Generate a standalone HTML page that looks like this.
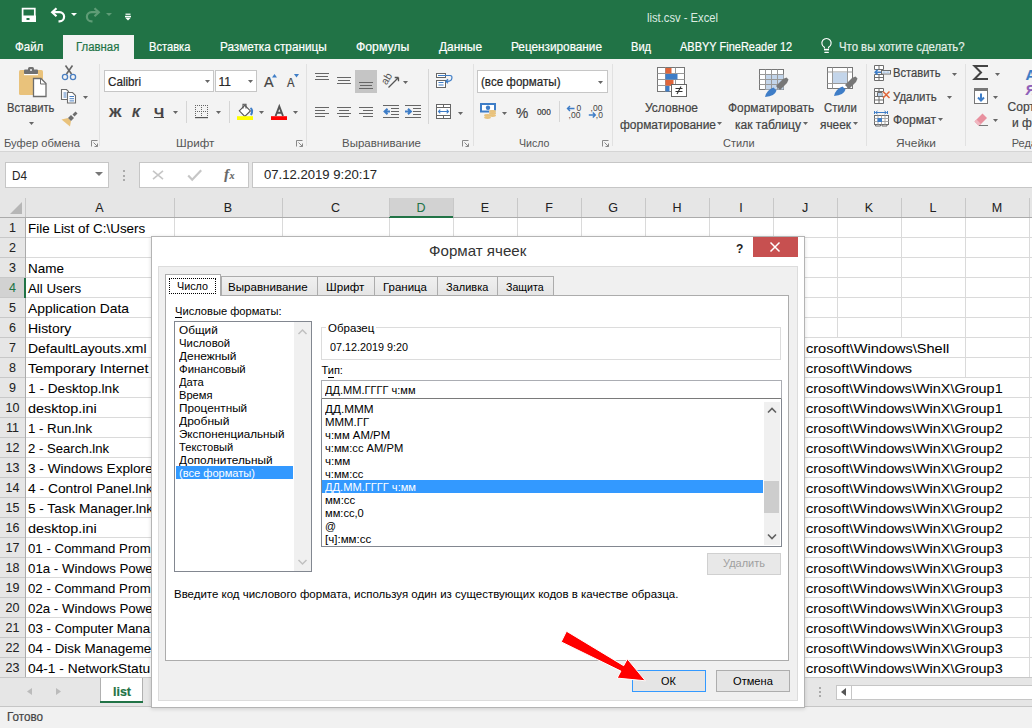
<!DOCTYPE html><html><head><meta charset="utf-8"><style>html,body{margin:0;padding:0;width:1032px;height:728px;overflow:hidden;position:relative;font-family:"Liberation Sans",sans-serif;background:#fff}svg{overflow:visible}.t{-webkit-text-stroke:0.2px}.cell,.cellj{-webkit-text-stroke:0.05px}.dlg{-webkit-text-stroke:0px}</style></head><body><div style="position:absolute;left:0px;top:0px;width:1032px;height:59px;background:#217346"></div>
<svg style="position:absolute;left:21px;top:7px;" width="16" height="16" viewBox="0 0 16 16"><path d="M1.6 1.6h12.2v12.2H1.6z" fill="none" stroke="#fff" stroke-width="1.7"/><rect x="1" y="8.5" width="14" height="1.8" fill="#fff"/><path d="M1 10h14v5H1z M5.5 11v3h3v-3z" fill="#fff" fill-rule="evenodd"/></svg>
<svg style="position:absolute;left:50px;top:7px;" width="16" height="15" viewBox="0 0 16 15"><path d="M3 5.2h6.5a4.6 4.6 0 0 1 0 9.2h-1" fill="none" stroke="#fff" stroke-width="2.2"/><path d="M6.5 1.2L2.2 5.2l4.3 4" fill="none" stroke="#fff" stroke-width="2.2"/></svg>
<svg style="position:absolute;left:71px;top:13px;" width="6" height="3" viewBox="0 0 6 3"><path d="M0 0h6l-3 3z" fill="#fff"/></svg>
<svg style="position:absolute;left:85px;top:7px;" width="16" height="15" viewBox="0 0 16 15"><path d="M13 5.2H6.5a4.6 4.6 0 0 0 0 9.2h1" fill="none" stroke="#5f9c76" stroke-width="2.2"/><path d="M9.5 1.2l4.3 4-4.3 4" fill="none" stroke="#5f9c76" stroke-width="2.2"/></svg>
<svg style="position:absolute;left:106px;top:13px;" width="6" height="3" viewBox="0 0 6 3"><path d="M0 0h6l-3 3z" fill="#5f9c76"/></svg>
<svg style="position:absolute;left:125px;top:13px;" width="6" height="8" viewBox="0 0 6 8"><rect x="0.5" y="0.6" width="5" height="1.2" fill="#fff"/><rect x="0" y="2.8" width="6" height="1.2" fill="#fff"/><path d="M0 4.5h6l-3 3z" fill="#fff"/></svg>
<div id="t0" class="t dlg" style="position:absolute;left:647px;top:11.79px;font-size:12.3px;line-height:12.3px;color:#dcebe1;font-weight:normal;white-space:nowrap;transform:scaleX(0.9115);transform-origin:0 0;">list.csv - Excel</div>
<div style="position:absolute;left:63px;top:35px;width:71px;height:24px;background:#f3f3f3"></div>
<div id="t1" class="t " style="position:absolute;left:15px;top:41.34px;font-size:12px;line-height:12px;color:#fff;font-weight:normal;white-space:nowrap;transform:scaleX(0.9588);transform-origin:0 0;">Файл</div>
<div id="t2" class="t " style="position:absolute;left:76px;top:41.34px;font-size:12px;line-height:12px;color:#217346;font-weight:normal;white-space:nowrap;transform:scaleX(0.9477);transform-origin:0 0;">Главная</div>
<div id="t3" class="t " style="position:absolute;left:149.3px;top:41.34px;font-size:12px;line-height:12px;color:#fff;font-weight:normal;white-space:nowrap;transform:scaleX(0.9281);transform-origin:0 0;">Вставка</div>
<div id="t4" class="t " style="position:absolute;left:220px;top:41.34px;font-size:12px;line-height:12px;color:#fff;font-weight:normal;white-space:nowrap;transform:scaleX(0.9800);transform-origin:0 0;">Разметка страницы</div>
<div id="t5" class="t " style="position:absolute;left:356px;top:41.34px;font-size:12px;line-height:12px;color:#fff;font-weight:normal;white-space:nowrap;transform:scaleX(1.0207);transform-origin:0 0;">Формулы</div>
<div id="t6" class="t " style="position:absolute;left:439px;top:41.34px;font-size:12px;line-height:12px;color:#fff;font-weight:normal;white-space:nowrap;transform:scaleX(0.9917);transform-origin:0 0;">Данные</div>
<div id="t7" class="t " style="position:absolute;left:511px;top:41.34px;font-size:12px;line-height:12px;color:#fff;font-weight:normal;white-space:nowrap;transform:scaleX(0.9820);transform-origin:0 0;">Рецензирование</div>
<div id="t8" class="t " style="position:absolute;left:631.4px;top:41.34px;font-size:12px;line-height:12px;color:#fff;font-weight:normal;white-space:nowrap;transform:scaleX(0.9255);transform-origin:0 0;">Вид</div>
<div id="t9" class="t " style="position:absolute;left:679.5px;top:41.34px;font-size:12px;line-height:12px;color:#fff;font-weight:normal;white-space:nowrap;transform:scaleX(0.9157);transform-origin:0 0;">ABBYY FineReader 12</div>
<div id="t10" class="t " style="position:absolute;left:838.6px;top:41.34px;font-size:12px;line-height:12px;color:#e4efe8;font-weight:normal;white-space:nowrap;transform:scaleX(0.9468);transform-origin:0 0;">Что вы хотите сделать?</div>
<svg style="position:absolute;left:821px;top:38px;" width="12" height="16" viewBox="0 0 12 16"><path d="M3.4 10.5V9.2A4.6 4.6 0 1 1 7.6 9.2v1.3" fill="none" stroke="#fff" stroke-width="1.1"/><rect x="3" y="10.8" width="5" height="1.6" fill="#fff"/><rect x="3.3" y="13.8" width="4.6" height="1.2" rx="0.6" fill="#fff"/></svg>
<div style="position:absolute;left:0px;top:59px;width:1032px;height:92px;background:#f3f3f3"></div>
<div style="position:absolute;left:0px;top:151px;width:1032px;height:1px;background:#d5d5d5"></div>
<div style="position:absolute;left:99px;top:64px;width:1px;height:82px;background:#e1e1e1"></div>
<div style="position:absolute;left:306px;top:64px;width:1px;height:82px;background:#e1e1e1"></div>
<div style="position:absolute;left:473px;top:64px;width:1px;height:82px;background:#e1e1e1"></div>
<div style="position:absolute;left:612px;top:64px;width:1px;height:82px;background:#e1e1e1"></div>
<div style="position:absolute;left:866px;top:64px;width:1px;height:82px;background:#e1e1e1"></div>
<div style="position:absolute;left:965px;top:64px;width:1px;height:82px;background:#e1e1e1"></div>
<div id="t11" class="t dlg" style="position:absolute;left:3.5px;top:137.79px;font-size:11px;line-height:11px;color:#555;font-weight:normal;white-space:nowrap;transform:scaleX(1.0167);transform-origin:0 0;">Буфер обмена</div>
<div id="t12" class="t dlg" style="position:absolute;left:175.7px;top:137.79px;font-size:11px;line-height:11px;color:#555;font-weight:normal;white-space:nowrap;transform:scaleX(1.0579);transform-origin:0 0;">Шрифт</div>
<div id="t13" class="t dlg" style="position:absolute;left:341.5px;top:137.79px;font-size:11px;line-height:11px;color:#555;font-weight:normal;white-space:nowrap;transform:scaleX(1.0433);transform-origin:0 0;">Выравнивание</div>
<div id="t14" class="t dlg" style="position:absolute;left:518.7px;top:137.79px;font-size:11px;line-height:11px;color:#555;font-weight:normal;white-space:nowrap;transform:scaleX(0.9640);transform-origin:0 0;">Число</div>
<div id="t15" class="t dlg" style="position:absolute;left:723.4px;top:137.79px;font-size:11px;line-height:11px;color:#555;font-weight:normal;white-space:nowrap;transform:scaleX(0.9936);transform-origin:0 0;">Стили</div>
<div id="t16" class="t dlg" style="position:absolute;left:895.8px;top:137.79px;font-size:11px;line-height:11px;color:#555;font-weight:normal;white-space:nowrap;transform:scaleX(1.0838);transform-origin:0 0;">Ячейки</div>
<div id="t17" class="t dlg" style="position:absolute;left:1011.7px;top:137.79px;font-size:11px;line-height:11px;color:#555;font-weight:normal;white-space:nowrap;">Реда</div>
<svg style="position:absolute;left:91px;top:140px;" width="7" height="7" viewBox="0 0 7 7"><path d="M0.5 6.5V0.5h6" fill="none" stroke="#888" stroke-width="1"/><path d="M2.5 2.5l4 4M6.5 3.5v3h-3" fill="none" stroke="#888" stroke-width="1"/></svg>
<svg style="position:absolute;left:296px;top:140px;" width="7" height="7" viewBox="0 0 7 7"><path d="M0.5 6.5V0.5h6" fill="none" stroke="#888" stroke-width="1"/><path d="M2.5 2.5l4 4M6.5 3.5v3h-3" fill="none" stroke="#888" stroke-width="1"/></svg>
<svg style="position:absolute;left:462px;top:140px;" width="7" height="7" viewBox="0 0 7 7"><path d="M0.5 6.5V0.5h6" fill="none" stroke="#888" stroke-width="1"/><path d="M2.5 2.5l4 4M6.5 3.5v3h-3" fill="none" stroke="#888" stroke-width="1"/></svg>
<svg style="position:absolute;left:602px;top:140px;" width="7" height="7" viewBox="0 0 7 7"><path d="M0.5 6.5V0.5h6" fill="none" stroke="#888" stroke-width="1"/><path d="M2.5 2.5l4 4M6.5 3.5v3h-3" fill="none" stroke="#888" stroke-width="1"/></svg>
<svg style="position:absolute;left:18px;top:66px;" width="30" height="32" viewBox="0 0 30 32"><rect x="1" y="4" width="24" height="25" rx="1.5" fill="#e9c27b"/><rect x="6" y="3.5" width="14" height="4.5" rx="1" fill="#717171"/><rect x="10" y="1" width="6" height="4" rx="1.5" fill="#717171"/><circle cx="13" cy="4" r="1" fill="#f3f3f3"/><rect x="6" y="8" width="14" height="1.2" fill="#fff"/><path d="M15.5 12.5h7.5l5 5v13h-12.5z" fill="#fff" stroke="#6d6d6d" stroke-width="1.3"/><path d="M22.5 12.5v5.5h5.5" fill="none" stroke="#6d6d6d" stroke-width="1"/></svg>
<div id="t18" class="t " style="position:absolute;left:7.4px;top:102.04px;font-size:12px;line-height:12px;color:#444;font-weight:normal;white-space:nowrap;transform:scaleX(0.9317);transform-origin:0 0;">Вставить</div>
<svg style="position:absolute;left:29px;top:121.5px;" width="5" height="3" viewBox="0 0 5 3"><path d="M0 0h5l-2.5 3z" fill="#666"/></svg>
<svg style="position:absolute;left:61px;top:64px;" width="16" height="17" viewBox="0 0 16 17"><path d="M4.5 1.5l6 8.5M11.5 1.5l-6 8.5" stroke="#666" stroke-width="1.6"/><circle cx="4" cy="13" r="2.6" fill="none" stroke="#4a7fc1" stroke-width="1.3"/><circle cx="12" cy="13" r="2.6" fill="none" stroke="#4a7fc1" stroke-width="1.3"/></svg>
<svg style="position:absolute;left:60px;top:88px;" width="17" height="16" viewBox="0 0 17 16"><path d="M1.5 1.5h5l2 2v8h-7z" fill="#fff" stroke="#6d6d6d" stroke-width="1.1"/><path d="M3.5 5h3M3.5 7h3M3.5 9h3" stroke="#4a7fc1" stroke-width="1"/><path d="M7.5 4.5h5l3 3v7.5h-8z" fill="#fff" stroke="#6d6d6d" stroke-width="1.1"/><path d="M9.5 8.5h4.5M9.5 10.7h4.5M9.5 12.9h4.5" stroke="#4a7fc1" stroke-width="1"/></svg>
<svg style="position:absolute;left:83px;top:95.5px;" width="5" height="3" viewBox="0 0 5 3"><path d="M0 0h5l-2.5 3z" fill="#666"/></svg>
<svg style="position:absolute;left:61px;top:111px;" width="17" height="16" viewBox="0 0 17 16"><path d="M0.5 8.5l6.5-1.5 3 3-1 5.5z" fill="#e9c27b"/><path d="M7 7l3-3 3 3-3 3z" fill="#6d6d6d"/><path d="M11.5 3.5l3-3 2 2-3 3z" fill="#6d6d6d"/></svg>
<div style="position:absolute;left:104px;top:70px;width:110px;height:22px;background:#fff;border:1px solid #c6c6c6;box-sizing:border-box"></div>
<div style="position:absolute;left:215px;top:70px;width:42px;height:22px;background:#fff;border:1px solid #c6c6c6;box-sizing:border-box"></div>
<div id="t19" class="t " style="position:absolute;left:107.7px;top:75.84px;font-size:12px;line-height:12px;color:#262626;font-weight:normal;white-space:nowrap;transform:scaleX(0.9701);transform-origin:0 0;">Calibri</div>
<div id="t20" class="t " style="position:absolute;left:218.5px;top:75.84px;font-size:12px;line-height:12px;color:#262626;font-weight:normal;white-space:nowrap;">11</div>
<svg style="position:absolute;left:205px;top:79.5px;" width="5" height="3" viewBox="0 0 5 3"><path d="M0 0h5l-2.5 3z" fill="#666"/></svg>
<svg style="position:absolute;left:248px;top:79.5px;" width="5" height="3" viewBox="0 0 5 3"><path d="M0 0h5l-2.5 3z" fill="#666"/></svg>
<div id="t21" class="t " style="position:absolute;left:264.3px;top:74.30px;font-size:15px;line-height:15px;color:#444;font-weight:normal;white-space:nowrap;transform:scaleX(0.9585);transform-origin:0 0;">A</div>
<svg style="position:absolute;left:272px;top:73.5px;" width="5" height="3.5" viewBox="0 0 5 3.5"><path d="M0 3.5h5l-2.5-3.5z" fill="#3e7dc7"/></svg>
<div id="t22" class="t " style="position:absolute;left:287.2px;top:76.84px;font-size:12px;line-height:12px;color:#444;font-weight:normal;white-space:nowrap;transform:scaleX(0.9357);transform-origin:0 0;">A</div>
<svg style="position:absolute;left:294px;top:74px;" width="5" height="3.5" viewBox="0 0 5 3.5"><path d="M0 0h5l-2.5 3.5z" fill="#3e7dc7"/></svg>
<div id="t23" class="t " style="position:absolute;left:108.5px;top:105.50px;font-size:13px;line-height:13px;color:#444;font-weight:bold;white-space:nowrap;transform:scaleX(1.0638);transform-origin:0 0;">Ж</div>
<div id="t24" class="t " style="position:absolute;left:132px;top:105.50px;font-size:13px;line-height:13px;color:#444;font-weight:bold;font-style:italic;white-space:nowrap;transform:scaleX(1.0000);transform-origin:0 0;">К</div>
<div id="t25" class="t " style="position:absolute;left:154px;top:105.50px;font-size:13px;line-height:13px;color:#444;font-weight:bold;white-space:nowrap;transform:scaleX(1.0940);transform-origin:0 0;">Ч</div>
<div style="position:absolute;left:154px;top:117px;width:10px;height:1px;background:#444"></div>
<svg style="position:absolute;left:173px;top:110.5px;" width="5" height="3" viewBox="0 0 5 3"><path d="M0 0h5l-2.5 3z" fill="#666"/></svg>
<div style="position:absolute;left:186px;top:101px;width:1px;height:22px;background:#d5d5d5"></div>
<svg style="position:absolute;left:195px;top:105px;" width="13" height="13" viewBox="0 0 13 13"><rect x="0" y="0" width="1" height="1" fill="#666"/><rect x="2" y="0" width="1" height="1" fill="#666"/><rect x="4" y="0" width="1" height="1" fill="#666"/><rect x="6" y="0" width="1" height="1" fill="#666"/><rect x="8" y="0" width="1" height="1" fill="#666"/><rect x="10" y="0" width="1" height="1" fill="#666"/><rect x="12" y="0" width="1" height="1" fill="#666"/><rect x="0" y="2" width="1" height="1" fill="#666"/><rect x="6" y="2" width="1" height="1" fill="#666"/><rect x="12" y="2" width="1" height="1" fill="#666"/><rect x="0" y="4" width="1" height="1" fill="#666"/><rect x="6" y="4" width="1" height="1" fill="#666"/><rect x="12" y="4" width="1" height="1" fill="#666"/><rect x="0" y="6" width="1" height="1" fill="#666"/><rect x="2" y="6" width="1" height="1" fill="#666"/><rect x="4" y="6" width="1" height="1" fill="#666"/><rect x="6" y="6" width="1" height="1" fill="#666"/><rect x="8" y="6" width="1" height="1" fill="#666"/><rect x="10" y="6" width="1" height="1" fill="#666"/><rect x="12" y="6" width="1" height="1" fill="#666"/><rect x="0" y="8" width="1" height="1" fill="#666"/><rect x="6" y="8" width="1" height="1" fill="#666"/><rect x="12" y="8" width="1" height="1" fill="#666"/><rect x="0" y="10" width="1" height="1" fill="#666"/><rect x="6" y="10" width="1" height="1" fill="#666"/><rect x="12" y="10" width="1" height="1" fill="#666"/><rect x="0" y="12" width="13" height="1.2" fill="#555"/></svg>
<svg style="position:absolute;left:216px;top:110.5px;" width="5" height="3" viewBox="0 0 5 3"><path d="M0 0h5l-2.5 3z" fill="#666"/></svg>
<div style="position:absolute;left:229px;top:101px;width:1px;height:22px;background:#d5d5d5"></div>
<svg style="position:absolute;left:237px;top:103px;" width="17" height="18" viewBox="0 0 17 18"><path d="M2.3 7.8L7.8 2.3l5.6 5.6-5.6 5.6z" fill="#fff" stroke="#555" stroke-width="1.1"/><path d="M6 5.5V1.3h3v4.2" fill="none" stroke="#555" stroke-width="1.1"/><path d="M13.5 5q3 2 0.5 7" fill="none" stroke="#3e7dc7" stroke-width="2"/><rect x="0" y="13.2" width="16" height="3.8" fill="#ff0"/></svg>
<svg style="position:absolute;left:259px;top:110.5px;" width="5" height="3" viewBox="0 0 5 3"><path d="M0 0h5l-2.5 3z" fill="#666"/></svg>
<svg style="position:absolute;left:271px;top:103px;" width="16" height="18" viewBox="0 0 16 18"><path d="M4.6 13L8.3 3.3 12 13M5.8 9.8h5" fill="none" stroke="#555" stroke-width="1.9"/><rect x="0" y="13.2" width="16" height="3.8" fill="#f00"/></svg>
<svg style="position:absolute;left:293px;top:110.5px;" width="5" height="3" viewBox="0 0 5 3"><path d="M0 0h5l-2.5 3z" fill="#666"/></svg>
<svg style="position:absolute;left:315px;top:73px;" width="14" height="7" viewBox="0 0 14 7"><rect x="0" y="0" width="14" height="1" fill="#666"/><rect x="1" y="3" width="12" height="1" fill="#666"/><rect x="0" y="6" width="14" height="1" fill="#666"/></svg>
<svg style="position:absolute;left:337px;top:77px;" width="14" height="7" viewBox="0 0 14 7"><rect x="0" y="0" width="14" height="1" fill="#666"/><rect x="1" y="3" width="12" height="1" fill="#666"/><rect x="0" y="6" width="14" height="1" fill="#666"/></svg>
<div style="position:absolute;left:355px;top:70px;width:22px;height:23px;background:#c5c5c5"></div>
<svg style="position:absolute;left:359px;top:82px;" width="14" height="7" viewBox="0 0 14 7"><rect x="0" y="0" width="14" height="1" fill="#666"/><rect x="1" y="3" width="12" height="1" fill="#666"/><rect x="0" y="6" width="14" height="1" fill="#666"/></svg>
<svg style="position:absolute;left:382px;top:72px;" width="18" height="17" viewBox="0 0 18 17"><text x="0" y="0" font-family="Liberation Sans" font-size="10.5" fill="#555" transform="translate(4.5 13.5) rotate(-58)">ab</text><path d="M6.5 15.5L16.5 5.5M16.5 5.5h-3.8M16.5 5.5v3.8" fill="none" stroke="#555" stroke-width="1.3"/></svg>
<svg style="position:absolute;left:403px;top:80.5px;" width="5" height="3" viewBox="0 0 5 3"><path d="M0 0h5l-2.5 3z" fill="#666"/></svg>
<div style="position:absolute;left:428px;top:69px;width:1px;height:55px;background:#d6d6d6"></div>
<svg style="position:absolute;left:436px;top:72px;" width="17" height="17" viewBox="0 0 17 17"><rect x="0.5" y="1.5" width="9" height="4" fill="#fff" stroke="#666"/><rect x="0.5" y="8.5" width="9" height="7" fill="#fff" stroke="#666"/><path d="M2 3.5h12M2.5 10.5h5M2.5 13h5" stroke="#3e7dc7"/><path d="M14 3.5q2.5 0 1.8 3.2T10 9.3M12 7.3l-2.2 2 2.2 2" fill="none" stroke="#3e7dc7" stroke-width="1.2"/></svg>
<svg style="position:absolute;left:315px;top:107px;" width="14" height="10" viewBox="0 0 14 10"><rect x="0" y="0" width="14" height="1" fill="#666"/><rect x="0" y="3" width="10" height="1" fill="#666"/><rect x="0" y="6" width="14" height="1" fill="#666"/><rect x="0" y="9" width="10" height="1" fill="#666"/></svg>
<svg style="position:absolute;left:337px;top:107px;" width="14" height="10" viewBox="0 0 14 10"><rect x="0" y="0" width="14" height="1" fill="#666"/><rect x="2" y="3" width="10" height="1" fill="#666"/><rect x="0" y="6" width="14" height="1" fill="#666"/><rect x="2" y="9" width="10" height="1" fill="#666"/></svg>
<svg style="position:absolute;left:359px;top:107px;" width="14" height="10" viewBox="0 0 14 10"><rect x="0" y="0" width="14" height="1" fill="#666"/><rect x="4" y="3" width="10" height="1" fill="#666"/><rect x="0" y="6" width="14" height="1" fill="#666"/><rect x="4" y="9" width="10" height="1" fill="#666"/></svg>
<svg style="position:absolute;left:383px;top:105px;" width="16" height="13" viewBox="0 0 16 13"><rect x="0" y="0" width="16" height="1" fill="#666"/><rect x="8" y="3" width="8" height="1" fill="#666"/><rect x="8" y="6" width="8" height="1" fill="#666"/><rect x="8" y="9" width="8" height="1" fill="#666"/><rect x="0" y="12" width="16" height="1" fill="#666"/><path d="M1.5 6.5h5.5M4.5 3.8L1.6 6.5l2.9 2.7" fill="none" stroke="#3e7dc7" stroke-width="2"/></svg>
<svg style="position:absolute;left:405px;top:105px;" width="16" height="13" viewBox="0 0 16 13"><rect x="0" y="0" width="16" height="1" fill="#666"/><rect x="8" y="3" width="8" height="1" fill="#666"/><rect x="8" y="6" width="8" height="1" fill="#666"/><rect x="8" y="9" width="8" height="1" fill="#666"/><rect x="0" y="12" width="16" height="1" fill="#666"/><path d="M0 6.5h5.5M3 3.8l2.9 2.7L3 9.2" fill="none" stroke="#3e7dc7" stroke-width="2"/></svg>
<svg style="position:absolute;left:436px;top:104px;" width="16" height="16" viewBox="0 0 16 16"><rect x="0.5" y="0.5" width="14" height="14" fill="#fff" stroke="#666"/><path d="M0.5 3.5h14M0.5 11.5h14M7.5 0.5v3M7.5 11.5v3" stroke="#666"/><path d="M2.5 7.5h10M4.3 5.7L2.5 7.5l1.8 1.8M10.7 5.7l1.8 1.8-1.8 1.8" fill="none" stroke="#3e7dc7" stroke-width="1.1"/></svg>
<svg style="position:absolute;left:458px;top:111.5px;" width="5" height="3" viewBox="0 0 5 3"><path d="M0 0h5l-2.5 3z" fill="#666"/></svg>
<div style="position:absolute;left:477px;top:70px;width:131px;height:23px;background:#fff;border:1px solid #c6c6c6;box-sizing:border-box"></div>
<div id="t26" class="t " style="position:absolute;left:480.5px;top:76.04px;font-size:12px;line-height:12px;color:#262626;font-weight:normal;white-space:nowrap;transform:scaleX(0.9666);transform-origin:0 0;">(все форматы)</div>
<svg style="position:absolute;left:598px;top:80.5px;" width="5" height="3" viewBox="0 0 5 3"><path d="M0 0h5l-2.5 3z" fill="#666"/></svg>
<svg style="position:absolute;left:480px;top:103px;" width="17" height="17" viewBox="0 0 17 17"><rect x="1" y="1" width="14" height="7.5" fill="#fff" stroke="#3e7dc7" stroke-width="2"/><circle cx="8" cy="4.8" r="2.2" fill="#3e7dc7"/><path d="M9 7.5h7v2H9z" fill="#f3f3f3"/><ellipse cx="12.5" cy="8.2" rx="3.5" ry="1.3" fill="#e9c27b"/><ellipse cx="12.5" cy="10.4" rx="3.5" ry="1.3" fill="#e9c27b"/><ellipse cx="12.5" cy="12.6" rx="3.5" ry="1.3" fill="#e9c27b"/><ellipse cx="7.5" cy="12.4" rx="3.4" ry="1.3" fill="#e9c27b"/><ellipse cx="7.5" cy="14.6" rx="3.4" ry="1.3" fill="#e9c27b"/></svg>
<svg style="position:absolute;left:502px;top:111.5px;" width="5" height="3" viewBox="0 0 5 3"><path d="M0 0h5l-2.5 3z" fill="#666"/></svg>
<div id="t27" class="t " style="position:absolute;left:516.3px;top:105.18px;font-size:15.5px;line-height:15.5px;color:#444;font-weight:normal;white-space:nowrap;transform:scaleX(0.8915);transform-origin:0 0;">%</div>
<div id="t28" class="t " style="position:absolute;left:537px;top:107.16px;font-size:9.5px;line-height:9.5px;color:#333;font-weight:normal;white-space:nowrap;transform:scaleX(0.8701);transform-origin:0 0;">000</div>
<div style="position:absolute;left:559px;top:101px;width:1px;height:21px;background:#d6d6d6"></div>
<svg style="position:absolute;left:566px;top:104px;" width="17" height="17" viewBox="0 0 17 17"><text x="10.6" y="6.5" font-family="Liberation Sans" font-size="8.5" fill="#444">0</text><text x="2.6" y="14.3" font-family="Liberation Sans" font-size="8.5" fill="#444">,00</text><path d="M1.5 4.5h7M4 2L1.5 4.5 4 7" fill="none" stroke="#3e7dc7" stroke-width="1.4"/></svg>
<svg style="position:absolute;left:588px;top:104px;" width="17" height="17" viewBox="0 0 17 17"><text x="2.6" y="6.5" font-family="Liberation Sans" font-size="8.5" fill="#444">,00</text><text x="7.8" y="14.3" font-family="Liberation Sans" font-size="8.5" fill="#444">,0</text><path d="M0.8 11h6.5M4.8 8.5l2.5 2.5-2.5 2.5" fill="none" stroke="#3e7dc7" stroke-width="1.4"/></svg>
<svg style="position:absolute;left:657px;top:67px;" width="31" height="31" viewBox="0 0 31 31"><rect x="0.5" y="0.5" width="27" height="24" fill="#fff" stroke="#777"/><path d="M0.5 6.5h27M0.5 12.5h27M0.5 18.5h27M8.5 0.5v24M18.5 0.5v24" stroke="#999"/><rect x="8.5" y="1" width="6" height="5.5" fill="#e0653a"/><rect x="8.5" y="7" width="12" height="5.5" fill="#3e7dc7"/><rect x="8.5" y="13" width="8" height="5.5" fill="#e0653a"/><rect x="8.5" y="19" width="4" height="5.5" fill="#3e7dc7"/><rect x="14.5" y="17.5" width="15" height="12" fill="#fff" stroke="#666"/><path d="M18.5 21.5h7M18.5 24.5h7M24 19.5l-4 7.5" stroke="#333" stroke-width="1.1"/></svg>
<div id="t29" class="t " style="position:absolute;left:645.3px;top:102.04px;font-size:12px;line-height:12px;color:#444;font-weight:normal;white-space:nowrap;transform:scaleX(1.0003);transform-origin:0 0;">Условное</div>
<div id="t30" class="t " style="position:absolute;left:620px;top:118.54px;font-size:12px;line-height:12px;color:#444;font-weight:normal;white-space:nowrap;transform:scaleX(0.9963);transform-origin:0 0;">форматирование</div>
<svg style="position:absolute;left:717px;top:122px;" width="5" height="3" viewBox="0 0 5 3"><path d="M0 0h5l-2.5 3z" fill="#666"/></svg>
<svg style="position:absolute;left:759px;top:69px;" width="31" height="30" viewBox="0 0 31 30"><rect x="0.5" y="0.5" width="24" height="20" fill="#fff" stroke="#777"/><rect x="6" y="5.5" width="18.5" height="15" fill="#c3d5ea"/><path d="M0.5 5.5h24M0.5 10.5h24M0.5 15.5h24M6.5 0.5v20M12.5 0.5v20M18.5 0.5v20" stroke="#999"/><path d="M17 17l7-7 3.5-1.5 2 2L28 14l-7 7z" fill="#777"/><path d="M6 28q1.5-7 8.5-9.5l3 3Q16 27 6 28z" fill="#3e7dc7"/></svg>
<div id="t31" class="t " style="position:absolute;left:728.4px;top:102.04px;font-size:12px;line-height:12px;color:#444;font-weight:normal;white-space:nowrap;transform:scaleX(0.9899);transform-origin:0 0;">Форматировать</div>
<div id="t32" class="t " style="position:absolute;left:735.2px;top:118.54px;font-size:12px;line-height:12px;color:#444;font-weight:normal;white-space:nowrap;transform:scaleX(1.0043);transform-origin:0 0;">как таблицу</div>
<svg style="position:absolute;left:803px;top:122px;" width="5" height="3" viewBox="0 0 5 3"><path d="M0 0h5l-2.5 3z" fill="#666"/></svg>
<svg style="position:absolute;left:827px;top:67px;" width="31" height="31" viewBox="0 0 31 31"><rect x="0.5" y="0.5" width="25" height="21" fill="#fff" stroke="#777"/><path d="M0.5 5h25M0.5 16.5h25M5.5 0.5v21M20.5 0.5v21" stroke="#999"/><rect x="6" y="5.5" width="14" height="10.5" fill="#c3d5ea"/><path d="M18 18l7-7 3.5-1.5 2 2L29 15l-7 7z" fill="#777"/><path d="M7 29q1.5-7 8.5-9.5l3 3Q17 28 7 29z" fill="#3e7dc7"/></svg>
<div id="t33" class="t " style="position:absolute;left:823.6px;top:102.04px;font-size:12px;line-height:12px;color:#444;font-weight:normal;white-space:nowrap;transform:scaleX(0.9486);transform-origin:0 0;">Стили</div>
<div id="t34" class="t " style="position:absolute;left:820.4px;top:118.54px;font-size:12px;line-height:12px;color:#444;font-weight:normal;white-space:nowrap;transform:scaleX(0.9885);transform-origin:0 0;">ячеек</div>
<svg style="position:absolute;left:853px;top:122px;" width="5" height="3" viewBox="0 0 5 3"><path d="M0 0h5l-2.5 3z" fill="#666"/></svg>
<svg style="position:absolute;left:874px;top:65px;" width="17" height="16" viewBox="0 0 17 16"><path d="M0.5 0.5h9v4h-9zM5 0.5v4" fill="#fff" stroke="#6d6d6d"/><path d="M0.5 9.5h9v6h-9zM0.5 12.5h9M5 9.5v6" fill="#fff" stroke="#6d6d6d"/><rect x="7.5" y="5.5" width="9" height="3.5" fill="#fff" stroke="#6d6d6d"/><rect x="8.5" y="6.3" width="3.2" height="2" fill="#b8cfe9"/><rect x="12.3" y="6.3" width="3.2" height="2" fill="#b8cfe9"/><path d="M1 7.2h6M3.6 4.8L1.2 7.2l2.4 2.4" fill="none" stroke="#3e7dc7" stroke-width="1.6"/></svg>
<div id="t35" class="t " style="position:absolute;left:893.3px;top:67.34px;font-size:12px;line-height:12px;color:#444;font-weight:normal;white-space:nowrap;transform:scaleX(0.9337);transform-origin:0 0;">Вставить</div>
<svg style="position:absolute;left:952px;top:72.5px;" width="5" height="3" viewBox="0 0 5 3"><path d="M0 0h5l-2.5 3z" fill="#666"/></svg>
<svg style="position:absolute;left:874px;top:88px;" width="17" height="16" viewBox="0 0 17 16"><path d="M0.5 0.5h9v3h-9zM5 0.5v3" fill="#fff" stroke="#6d6d6d"/><path d="M0.5 8.5h9v7h-9zM0.5 12h9M5 8.5v7" fill="#fff" stroke="#6d6d6d"/><path d="M0.5 3.5v5M3.5 4.5h4.5v4h-4.5z" fill="none" stroke="#6d6d6d"/><rect x="4" y="5" width="3.5" height="3" fill="#b8cfe9"/><path d="M9 3.5l6.5 6.5M15.5 3.5L9 10" stroke="#e0653a" stroke-width="1.5"/></svg>
<div id="t36" class="t " style="position:absolute;left:893px;top:90.64px;font-size:12px;line-height:12px;color:#444;font-weight:normal;white-space:nowrap;transform:scaleX(0.9536);transform-origin:0 0;">Удалить</div>
<svg style="position:absolute;left:947px;top:95.5px;" width="5" height="3" viewBox="0 0 5 3"><path d="M0 0h5l-2.5 3z" fill="#666"/></svg>
<svg style="position:absolute;left:874px;top:111px;" width="16" height="16" viewBox="0 0 16 16"><path d="M0.5 0v3M13.5 0v3M1.5 1.5h11M3.5 0l-2 1.5 2 1.5M10.5 0l2 1.5-2 1.5" fill="none" stroke="#3e7dc7" stroke-width="1"/><rect x="0.5" y="4.5" width="14" height="9" fill="#fff" stroke="#6d6d6d"/><path d="M0.5 7.5h14M0.5 10.5h14M4 4.5v9M7.5 4.5v9M11 4.5v9" stroke="#aaa"/><rect x="3.5" y="7" width="4.5" height="4" fill="#3e7dc7"/><path d="M1.5 13.5v1.5h5v-1.5M8 13.5v1.5h5v-1.5" fill="none" stroke="#6d6d6d"/></svg>
<div id="t37" class="t " style="position:absolute;left:893.3px;top:114.04px;font-size:12px;line-height:12px;color:#444;font-weight:normal;white-space:nowrap;transform:scaleX(1.0084);transform-origin:0 0;">Формат</div>
<svg style="position:absolute;left:938px;top:118px;" width="5" height="3" viewBox="0 0 5 3"><path d="M0 0h5l-2.5 3z" fill="#666"/></svg>
<svg style="position:absolute;left:973px;top:65px;" width="16" height="15" viewBox="0 0 16 15"><path d="M15 1H1.5l6.5 6.5-6.5 6.5H15" fill="none" stroke="#444" stroke-width="2" stroke-linejoin="miter"/></svg>
<svg style="position:absolute;left:995px;top:72.5px;" width="5" height="3" viewBox="0 0 5 3"><path d="M0 0h5l-2.5 3z" fill="#666"/></svg>
<svg style="position:absolute;left:974px;top:88px;" width="14" height="16" viewBox="0 0 14 16"><rect x="0.5" y="0.5" width="13" height="15" fill="#fff" stroke="#777"/><rect x="0" y="0" width="14" height="3" fill="#777"/><path d="M7 5.5v7M4 9.5l3 3 3-3" fill="none" stroke="#3e7dc7" stroke-width="2"/></svg>
<svg style="position:absolute;left:993px;top:95.5px;" width="5" height="3" viewBox="0 0 5 3"><path d="M0 0h5l-2.5 3z" fill="#666"/></svg>
<svg style="position:absolute;left:974px;top:112px;" width="15" height="14" viewBox="0 0 15 14"><path d="M0.5 9.5l8-8 4.5 4.5-8 8z" fill="#e8909e"/><path d="M0.5 9.5l2-2 4.5 4.5-2 2z" fill="#f0b6c0"/><path d="M5 13.5h9" stroke="#777"/></svg>
<svg style="position:absolute;left:993px;top:118.5px;" width="5" height="3" viewBox="0 0 5 3"><path d="M0 0h5l-2.5 3z" fill="#666"/></svg>
<div id="t38" class="t " style="position:absolute;left:1025.5px;top:67.30px;font-size:15px;line-height:15px;color:#3e7dc7;font-weight:bold;white-space:nowrap;">А</div>
<div id="t39" class="t " style="position:absolute;left:1025.5px;top:82.65px;font-size:14px;line-height:14px;color:#8e5fb8;font-weight:bold;font-style:italic;white-space:nowrap;">Я</div>
<div id="t40" class="t " style="position:absolute;left:1007.6px;top:101.34px;font-size:12px;line-height:12px;color:#444;font-weight:normal;white-space:nowrap;">Сорт</div>
<div id="t41" class="t " style="position:absolute;left:1012px;top:117.34px;font-size:12px;line-height:12px;color:#444;font-weight:normal;white-space:nowrap;">и ф</div>
<div style="position:absolute;left:0px;top:152px;width:1032px;height:66px;background:#e6e6e6"></div>
<div style="position:absolute;left:5px;top:162px;width:104px;height:26px;background:#fff;border:1px solid #c6c6c6;box-sizing:border-box"></div>
<div id="t42" class="t cell" style="position:absolute;left:12.4px;top:169.64px;font-size:12px;line-height:12px;color:#262626;font-weight:normal;white-space:nowrap;transform:scaleX(0.9776);transform-origin:0 0;">D4</div>
<svg style="position:absolute;left:95px;top:172px;" width="8" height="4" viewBox="0 0 8 4"><path d="M0 0h8l-4 4z" fill="#777"/></svg>
<div style="position:absolute;left:123px;top:170px;width:2px;height:2px;background:#aaa"></div>
<div style="position:absolute;left:123px;top:174.5px;width:2px;height:2px;background:#aaa"></div>
<div style="position:absolute;left:123px;top:179px;width:2px;height:2px;background:#aaa"></div>
<div style="position:absolute;left:139px;top:162px;width:110px;height:26px;background:#fff;border:1px solid #c6c6c6;box-sizing:border-box"></div>
<svg style="position:absolute;left:152px;top:170px;" width="12" height="10" viewBox="0 0 12 10"><path d="M1 0.8l10 8.4M11 0.8L1 9.2" stroke="#c6c6c6" stroke-width="1.6"/></svg>
<svg style="position:absolute;left:187px;top:169px;" width="15" height="12" viewBox="0 0 15 12"><path d="M1.2 6.5l4 4.2 9-9.5" fill="none" stroke="#c6c6c6" stroke-width="2.2"/></svg>
<div id="t43" class="t " style="position:absolute;left:224.3px;top:168.15px;font-size:14px;line-height:14px;color:#666;font-weight:bold;font-style:italic;font-family:'Liberation Serif',serif;white-space:nowrap;">f</div>
<div id="t44" class="t " style="position:absolute;left:229.5px;top:171.34px;font-size:10px;line-height:10px;color:#666;font-weight:bold;font-style:italic;font-family:'Liberation Serif',serif;white-space:nowrap;">x</div>
<div style="position:absolute;left:252px;top:162px;width:780px;height:26px;background:#fff;border:1px solid #c6c6c6;border-right:none;box-sizing:border-box"></div>
<div id="t45" class="t cell" style="position:absolute;left:264.4px;top:169.22px;font-size:12.5px;line-height:12.5px;color:#262626;font-weight:normal;white-space:nowrap;transform:scaleX(1.0487);transform-origin:0 0;">07.12.2019  9:20:17</div>
<div style="position:absolute;left:0px;top:218px;width:1032px;height:460px;background:#fff"></div>
<div style="position:absolute;left:0px;top:217px;width:1032px;height:1px;background:#ababab"></div>
<div style="position:absolute;left:389px;top:198px;width:64px;height:19px;background:#d2d2d2"></div>
<div style="position:absolute;left:389px;top:216px;width:64px;height:2px;background:#217346"></div>
<div id="t46" class="t cell" style="position:absolute;left:49.5px;width:100px;text-align:center;top:202.02px;font-size:12.5px;line-height:12.5px;color:#222;font-weight:normal;white-space:nowrap;">A</div>
<div id="t47" class="t cell" style="position:absolute;left:178.0px;width:100px;text-align:center;top:202.02px;font-size:12.5px;line-height:12.5px;color:#222;font-weight:normal;white-space:nowrap;">B</div>
<div id="t48" class="t cell" style="position:absolute;left:285.5px;width:100px;text-align:center;top:202.02px;font-size:12.5px;line-height:12.5px;color:#222;font-weight:normal;white-space:nowrap;">C</div>
<div id="t49" class="t cell" style="position:absolute;left:371.0px;width:100px;text-align:center;top:202.02px;font-size:12.5px;line-height:12.5px;color:#217346;font-weight:normal;white-space:nowrap;">D</div>
<div id="t50" class="t cell" style="position:absolute;left:435.0px;width:100px;text-align:center;top:202.02px;font-size:12.5px;line-height:12.5px;color:#222;font-weight:normal;white-space:nowrap;">E</div>
<div id="t51" class="t cell" style="position:absolute;left:499.0px;width:100px;text-align:center;top:202.02px;font-size:12.5px;line-height:12.5px;color:#222;font-weight:normal;white-space:nowrap;">F</div>
<div id="t52" class="t cell" style="position:absolute;left:563.0px;width:100px;text-align:center;top:202.02px;font-size:12.5px;line-height:12.5px;color:#222;font-weight:normal;white-space:nowrap;">G</div>
<div id="t53" class="t cell" style="position:absolute;left:627.0px;width:100px;text-align:center;top:202.02px;font-size:12.5px;line-height:12.5px;color:#222;font-weight:normal;white-space:nowrap;">H</div>
<div id="t54" class="t cell" style="position:absolute;left:691.0px;width:100px;text-align:center;top:202.02px;font-size:12.5px;line-height:12.5px;color:#222;font-weight:normal;white-space:nowrap;">I</div>
<div id="t55" class="t cell" style="position:absolute;left:755.0px;width:100px;text-align:center;top:202.02px;font-size:12.5px;line-height:12.5px;color:#222;font-weight:normal;white-space:nowrap;">J</div>
<div id="t56" class="t cell" style="position:absolute;left:819.0px;width:100px;text-align:center;top:202.02px;font-size:12.5px;line-height:12.5px;color:#222;font-weight:normal;white-space:nowrap;">K</div>
<div id="t57" class="t cell" style="position:absolute;left:883.0px;width:100px;text-align:center;top:202.02px;font-size:12.5px;line-height:12.5px;color:#222;font-weight:normal;white-space:nowrap;">L</div>
<div id="t58" class="t cell" style="position:absolute;left:947.0px;width:100px;text-align:center;top:202.02px;font-size:12.5px;line-height:12.5px;color:#222;font-weight:normal;white-space:nowrap;">M</div>
<div style="position:absolute;left:25px;top:198px;width:1px;height:19px;background:#c8c8c8"></div>
<div style="position:absolute;left:174px;top:198px;width:1px;height:19px;background:#c8c8c8"></div>
<div style="position:absolute;left:282px;top:198px;width:1px;height:19px;background:#c8c8c8"></div>
<div style="position:absolute;left:389px;top:198px;width:1px;height:19px;background:#c8c8c8"></div>
<div style="position:absolute;left:453px;top:198px;width:1px;height:19px;background:#c8c8c8"></div>
<div style="position:absolute;left:517px;top:198px;width:1px;height:19px;background:#c8c8c8"></div>
<div style="position:absolute;left:581px;top:198px;width:1px;height:19px;background:#c8c8c8"></div>
<div style="position:absolute;left:645px;top:198px;width:1px;height:19px;background:#c8c8c8"></div>
<div style="position:absolute;left:709px;top:198px;width:1px;height:19px;background:#c8c8c8"></div>
<div style="position:absolute;left:773px;top:198px;width:1px;height:19px;background:#c8c8c8"></div>
<div style="position:absolute;left:837px;top:198px;width:1px;height:19px;background:#c8c8c8"></div>
<div style="position:absolute;left:901px;top:198px;width:1px;height:19px;background:#c8c8c8"></div>
<div style="position:absolute;left:965px;top:198px;width:1px;height:19px;background:#c8c8c8"></div>
<div style="position:absolute;left:1029px;top:198px;width:1px;height:19px;background:#c8c8c8"></div>
<svg style="position:absolute;left:10px;top:202px;" width="13" height="12" viewBox="0 0 13 12"><path d="M12 0v12H0z" fill="#b6b6b6"/></svg>
<div style="position:absolute;left:0px;top:218px;width:25px;height:460px;background:#e6e6e6"></div>
<div style="position:absolute;left:0px;top:278px;width:25px;height:20px;background:#d2d2d2"></div>
<div style="position:absolute;left:0px;top:237px;width:25px;height:1px;background:#c8c8c8"></div>
<div style="position:absolute;left:25px;top:237px;width:1007px;height:1px;background:#dadada"></div>
<div style="position:absolute;left:0px;top:257px;width:25px;height:1px;background:#c8c8c8"></div>
<div style="position:absolute;left:25px;top:257px;width:1007px;height:1px;background:#dadada"></div>
<div style="position:absolute;left:0px;top:277px;width:25px;height:1px;background:#c8c8c8"></div>
<div style="position:absolute;left:25px;top:277px;width:1007px;height:1px;background:#dadada"></div>
<div style="position:absolute;left:0px;top:297px;width:25px;height:1px;background:#c8c8c8"></div>
<div style="position:absolute;left:25px;top:297px;width:1007px;height:1px;background:#dadada"></div>
<div style="position:absolute;left:0px;top:317px;width:25px;height:1px;background:#c8c8c8"></div>
<div style="position:absolute;left:25px;top:317px;width:1007px;height:1px;background:#dadada"></div>
<div style="position:absolute;left:0px;top:337px;width:25px;height:1px;background:#c8c8c8"></div>
<div style="position:absolute;left:25px;top:337px;width:1007px;height:1px;background:#dadada"></div>
<div style="position:absolute;left:0px;top:357px;width:25px;height:1px;background:#c8c8c8"></div>
<div style="position:absolute;left:25px;top:357px;width:1007px;height:1px;background:#dadada"></div>
<div style="position:absolute;left:0px;top:377px;width:25px;height:1px;background:#c8c8c8"></div>
<div style="position:absolute;left:25px;top:377px;width:1007px;height:1px;background:#dadada"></div>
<div style="position:absolute;left:0px;top:397px;width:25px;height:1px;background:#c8c8c8"></div>
<div style="position:absolute;left:25px;top:397px;width:1007px;height:1px;background:#dadada"></div>
<div style="position:absolute;left:0px;top:417px;width:25px;height:1px;background:#c8c8c8"></div>
<div style="position:absolute;left:25px;top:417px;width:1007px;height:1px;background:#dadada"></div>
<div style="position:absolute;left:0px;top:437px;width:25px;height:1px;background:#c8c8c8"></div>
<div style="position:absolute;left:25px;top:437px;width:1007px;height:1px;background:#dadada"></div>
<div style="position:absolute;left:0px;top:457px;width:25px;height:1px;background:#c8c8c8"></div>
<div style="position:absolute;left:25px;top:457px;width:1007px;height:1px;background:#dadada"></div>
<div style="position:absolute;left:0px;top:477px;width:25px;height:1px;background:#c8c8c8"></div>
<div style="position:absolute;left:25px;top:477px;width:1007px;height:1px;background:#dadada"></div>
<div style="position:absolute;left:0px;top:497px;width:25px;height:1px;background:#c8c8c8"></div>
<div style="position:absolute;left:25px;top:497px;width:1007px;height:1px;background:#dadada"></div>
<div style="position:absolute;left:0px;top:517px;width:25px;height:1px;background:#c8c8c8"></div>
<div style="position:absolute;left:25px;top:517px;width:1007px;height:1px;background:#dadada"></div>
<div style="position:absolute;left:0px;top:537px;width:25px;height:1px;background:#c8c8c8"></div>
<div style="position:absolute;left:25px;top:537px;width:1007px;height:1px;background:#dadada"></div>
<div style="position:absolute;left:0px;top:557px;width:25px;height:1px;background:#c8c8c8"></div>
<div style="position:absolute;left:25px;top:557px;width:1007px;height:1px;background:#dadada"></div>
<div style="position:absolute;left:0px;top:577px;width:25px;height:1px;background:#c8c8c8"></div>
<div style="position:absolute;left:25px;top:577px;width:1007px;height:1px;background:#dadada"></div>
<div style="position:absolute;left:0px;top:597px;width:25px;height:1px;background:#c8c8c8"></div>
<div style="position:absolute;left:25px;top:597px;width:1007px;height:1px;background:#dadada"></div>
<div style="position:absolute;left:0px;top:617px;width:25px;height:1px;background:#c8c8c8"></div>
<div style="position:absolute;left:25px;top:617px;width:1007px;height:1px;background:#dadada"></div>
<div style="position:absolute;left:0px;top:637px;width:25px;height:1px;background:#c8c8c8"></div>
<div style="position:absolute;left:25px;top:637px;width:1007px;height:1px;background:#dadada"></div>
<div style="position:absolute;left:0px;top:657px;width:25px;height:1px;background:#c8c8c8"></div>
<div style="position:absolute;left:25px;top:657px;width:1007px;height:1px;background:#dadada"></div>
<div style="position:absolute;left:0px;top:677px;width:25px;height:1px;background:#c8c8c8"></div>
<div style="position:absolute;left:25px;top:677px;width:1007px;height:1px;background:#dadada"></div>
<div style="position:absolute;left:174px;top:218px;width:1px;height:19px;background:#dadada"></div>
<div style="position:absolute;left:282px;top:218px;width:1px;height:19px;background:#dadada"></div>
<div style="position:absolute;left:389px;top:218px;width:1px;height:19px;background:#dadada"></div>
<div style="position:absolute;left:453px;top:218px;width:1px;height:19px;background:#dadada"></div>
<div style="position:absolute;left:517px;top:218px;width:1px;height:19px;background:#dadada"></div>
<div style="position:absolute;left:581px;top:218px;width:1px;height:19px;background:#dadada"></div>
<div style="position:absolute;left:645px;top:218px;width:1px;height:19px;background:#dadada"></div>
<div style="position:absolute;left:709px;top:218px;width:1px;height:19px;background:#dadada"></div>
<div style="position:absolute;left:773px;top:218px;width:1px;height:19px;background:#dadada"></div>
<div style="position:absolute;left:837px;top:218px;width:1px;height:19px;background:#dadada"></div>
<div style="position:absolute;left:901px;top:218px;width:1px;height:19px;background:#dadada"></div>
<div style="position:absolute;left:965px;top:218px;width:1px;height:19px;background:#dadada"></div>
<div style="position:absolute;left:1029px;top:218px;width:1px;height:19px;background:#dadada"></div>
<div style="position:absolute;left:174px;top:238px;width:1px;height:19px;background:#dadada"></div>
<div style="position:absolute;left:282px;top:238px;width:1px;height:19px;background:#dadada"></div>
<div style="position:absolute;left:389px;top:238px;width:1px;height:19px;background:#dadada"></div>
<div style="position:absolute;left:453px;top:238px;width:1px;height:19px;background:#dadada"></div>
<div style="position:absolute;left:517px;top:238px;width:1px;height:19px;background:#dadada"></div>
<div style="position:absolute;left:581px;top:238px;width:1px;height:19px;background:#dadada"></div>
<div style="position:absolute;left:645px;top:238px;width:1px;height:19px;background:#dadada"></div>
<div style="position:absolute;left:709px;top:238px;width:1px;height:19px;background:#dadada"></div>
<div style="position:absolute;left:773px;top:238px;width:1px;height:19px;background:#dadada"></div>
<div style="position:absolute;left:837px;top:238px;width:1px;height:19px;background:#dadada"></div>
<div style="position:absolute;left:901px;top:238px;width:1px;height:19px;background:#dadada"></div>
<div style="position:absolute;left:965px;top:238px;width:1px;height:19px;background:#dadada"></div>
<div style="position:absolute;left:1029px;top:238px;width:1px;height:19px;background:#dadada"></div>
<div style="position:absolute;left:174px;top:258px;width:1px;height:19px;background:#dadada"></div>
<div style="position:absolute;left:282px;top:258px;width:1px;height:19px;background:#dadada"></div>
<div style="position:absolute;left:389px;top:258px;width:1px;height:19px;background:#dadada"></div>
<div style="position:absolute;left:453px;top:258px;width:1px;height:19px;background:#dadada"></div>
<div style="position:absolute;left:517px;top:258px;width:1px;height:19px;background:#dadada"></div>
<div style="position:absolute;left:581px;top:258px;width:1px;height:19px;background:#dadada"></div>
<div style="position:absolute;left:645px;top:258px;width:1px;height:19px;background:#dadada"></div>
<div style="position:absolute;left:709px;top:258px;width:1px;height:19px;background:#dadada"></div>
<div style="position:absolute;left:773px;top:258px;width:1px;height:19px;background:#dadada"></div>
<div style="position:absolute;left:837px;top:258px;width:1px;height:19px;background:#dadada"></div>
<div style="position:absolute;left:901px;top:258px;width:1px;height:19px;background:#dadada"></div>
<div style="position:absolute;left:965px;top:258px;width:1px;height:19px;background:#dadada"></div>
<div style="position:absolute;left:1029px;top:258px;width:1px;height:19px;background:#dadada"></div>
<div style="position:absolute;left:174px;top:278px;width:1px;height:19px;background:#dadada"></div>
<div style="position:absolute;left:282px;top:278px;width:1px;height:19px;background:#dadada"></div>
<div style="position:absolute;left:389px;top:278px;width:1px;height:19px;background:#dadada"></div>
<div style="position:absolute;left:453px;top:278px;width:1px;height:19px;background:#dadada"></div>
<div style="position:absolute;left:517px;top:278px;width:1px;height:19px;background:#dadada"></div>
<div style="position:absolute;left:581px;top:278px;width:1px;height:19px;background:#dadada"></div>
<div style="position:absolute;left:645px;top:278px;width:1px;height:19px;background:#dadada"></div>
<div style="position:absolute;left:709px;top:278px;width:1px;height:19px;background:#dadada"></div>
<div style="position:absolute;left:773px;top:278px;width:1px;height:19px;background:#dadada"></div>
<div style="position:absolute;left:837px;top:278px;width:1px;height:19px;background:#dadada"></div>
<div style="position:absolute;left:901px;top:278px;width:1px;height:19px;background:#dadada"></div>
<div style="position:absolute;left:965px;top:278px;width:1px;height:19px;background:#dadada"></div>
<div style="position:absolute;left:1029px;top:278px;width:1px;height:19px;background:#dadada"></div>
<div style="position:absolute;left:174px;top:298px;width:1px;height:19px;background:#dadada"></div>
<div style="position:absolute;left:282px;top:298px;width:1px;height:19px;background:#dadada"></div>
<div style="position:absolute;left:389px;top:298px;width:1px;height:19px;background:#dadada"></div>
<div style="position:absolute;left:453px;top:298px;width:1px;height:19px;background:#dadada"></div>
<div style="position:absolute;left:517px;top:298px;width:1px;height:19px;background:#dadada"></div>
<div style="position:absolute;left:581px;top:298px;width:1px;height:19px;background:#dadada"></div>
<div style="position:absolute;left:645px;top:298px;width:1px;height:19px;background:#dadada"></div>
<div style="position:absolute;left:709px;top:298px;width:1px;height:19px;background:#dadada"></div>
<div style="position:absolute;left:773px;top:298px;width:1px;height:19px;background:#dadada"></div>
<div style="position:absolute;left:837px;top:298px;width:1px;height:19px;background:#dadada"></div>
<div style="position:absolute;left:901px;top:298px;width:1px;height:19px;background:#dadada"></div>
<div style="position:absolute;left:965px;top:298px;width:1px;height:19px;background:#dadada"></div>
<div style="position:absolute;left:1029px;top:298px;width:1px;height:19px;background:#dadada"></div>
<div style="position:absolute;left:174px;top:318px;width:1px;height:19px;background:#dadada"></div>
<div style="position:absolute;left:282px;top:318px;width:1px;height:19px;background:#dadada"></div>
<div style="position:absolute;left:389px;top:318px;width:1px;height:19px;background:#dadada"></div>
<div style="position:absolute;left:453px;top:318px;width:1px;height:19px;background:#dadada"></div>
<div style="position:absolute;left:517px;top:318px;width:1px;height:19px;background:#dadada"></div>
<div style="position:absolute;left:581px;top:318px;width:1px;height:19px;background:#dadada"></div>
<div style="position:absolute;left:645px;top:318px;width:1px;height:19px;background:#dadada"></div>
<div style="position:absolute;left:709px;top:318px;width:1px;height:19px;background:#dadada"></div>
<div style="position:absolute;left:773px;top:318px;width:1px;height:19px;background:#dadada"></div>
<div style="position:absolute;left:837px;top:318px;width:1px;height:19px;background:#dadada"></div>
<div style="position:absolute;left:901px;top:318px;width:1px;height:19px;background:#dadada"></div>
<div style="position:absolute;left:965px;top:318px;width:1px;height:19px;background:#dadada"></div>
<div style="position:absolute;left:1029px;top:318px;width:1px;height:19px;background:#dadada"></div>
<div style="position:absolute;left:174px;top:338px;width:1px;height:19px;background:#dadada"></div>
<div style="position:absolute;left:282px;top:338px;width:1px;height:19px;background:#dadada"></div>
<div style="position:absolute;left:389px;top:338px;width:1px;height:19px;background:#dadada"></div>
<div style="position:absolute;left:453px;top:338px;width:1px;height:19px;background:#dadada"></div>
<div style="position:absolute;left:517px;top:338px;width:1px;height:19px;background:#dadada"></div>
<div style="position:absolute;left:581px;top:338px;width:1px;height:19px;background:#dadada"></div>
<div style="position:absolute;left:645px;top:338px;width:1px;height:19px;background:#dadada"></div>
<div style="position:absolute;left:709px;top:338px;width:1px;height:19px;background:#dadada"></div>
<div style="position:absolute;left:773px;top:338px;width:1px;height:19px;background:#dadada"></div>
<div style="position:absolute;left:965px;top:338px;width:1px;height:19px;background:#dadada"></div>
<div style="position:absolute;left:1029px;top:338px;width:1px;height:19px;background:#dadada"></div>
<div style="position:absolute;left:174px;top:358px;width:1px;height:19px;background:#dadada"></div>
<div style="position:absolute;left:282px;top:358px;width:1px;height:19px;background:#dadada"></div>
<div style="position:absolute;left:389px;top:358px;width:1px;height:19px;background:#dadada"></div>
<div style="position:absolute;left:453px;top:358px;width:1px;height:19px;background:#dadada"></div>
<div style="position:absolute;left:517px;top:358px;width:1px;height:19px;background:#dadada"></div>
<div style="position:absolute;left:581px;top:358px;width:1px;height:19px;background:#dadada"></div>
<div style="position:absolute;left:645px;top:358px;width:1px;height:19px;background:#dadada"></div>
<div style="position:absolute;left:709px;top:358px;width:1px;height:19px;background:#dadada"></div>
<div style="position:absolute;left:773px;top:358px;width:1px;height:19px;background:#dadada"></div>
<div style="position:absolute;left:965px;top:358px;width:1px;height:19px;background:#dadada"></div>
<div style="position:absolute;left:1029px;top:358px;width:1px;height:19px;background:#dadada"></div>
<div style="position:absolute;left:174px;top:378px;width:1px;height:19px;background:#dadada"></div>
<div style="position:absolute;left:282px;top:378px;width:1px;height:19px;background:#dadada"></div>
<div style="position:absolute;left:389px;top:378px;width:1px;height:19px;background:#dadada"></div>
<div style="position:absolute;left:453px;top:378px;width:1px;height:19px;background:#dadada"></div>
<div style="position:absolute;left:517px;top:378px;width:1px;height:19px;background:#dadada"></div>
<div style="position:absolute;left:581px;top:378px;width:1px;height:19px;background:#dadada"></div>
<div style="position:absolute;left:645px;top:378px;width:1px;height:19px;background:#dadada"></div>
<div style="position:absolute;left:709px;top:378px;width:1px;height:19px;background:#dadada"></div>
<div style="position:absolute;left:773px;top:378px;width:1px;height:19px;background:#dadada"></div>
<div style="position:absolute;left:1029px;top:378px;width:1px;height:19px;background:#dadada"></div>
<div style="position:absolute;left:174px;top:398px;width:1px;height:19px;background:#dadada"></div>
<div style="position:absolute;left:282px;top:398px;width:1px;height:19px;background:#dadada"></div>
<div style="position:absolute;left:389px;top:398px;width:1px;height:19px;background:#dadada"></div>
<div style="position:absolute;left:453px;top:398px;width:1px;height:19px;background:#dadada"></div>
<div style="position:absolute;left:517px;top:398px;width:1px;height:19px;background:#dadada"></div>
<div style="position:absolute;left:581px;top:398px;width:1px;height:19px;background:#dadada"></div>
<div style="position:absolute;left:645px;top:398px;width:1px;height:19px;background:#dadada"></div>
<div style="position:absolute;left:709px;top:398px;width:1px;height:19px;background:#dadada"></div>
<div style="position:absolute;left:773px;top:398px;width:1px;height:19px;background:#dadada"></div>
<div style="position:absolute;left:1029px;top:398px;width:1px;height:19px;background:#dadada"></div>
<div style="position:absolute;left:174px;top:418px;width:1px;height:19px;background:#dadada"></div>
<div style="position:absolute;left:282px;top:418px;width:1px;height:19px;background:#dadada"></div>
<div style="position:absolute;left:389px;top:418px;width:1px;height:19px;background:#dadada"></div>
<div style="position:absolute;left:453px;top:418px;width:1px;height:19px;background:#dadada"></div>
<div style="position:absolute;left:517px;top:418px;width:1px;height:19px;background:#dadada"></div>
<div style="position:absolute;left:581px;top:418px;width:1px;height:19px;background:#dadada"></div>
<div style="position:absolute;left:645px;top:418px;width:1px;height:19px;background:#dadada"></div>
<div style="position:absolute;left:709px;top:418px;width:1px;height:19px;background:#dadada"></div>
<div style="position:absolute;left:773px;top:418px;width:1px;height:19px;background:#dadada"></div>
<div style="position:absolute;left:1029px;top:418px;width:1px;height:19px;background:#dadada"></div>
<div style="position:absolute;left:174px;top:438px;width:1px;height:19px;background:#dadada"></div>
<div style="position:absolute;left:282px;top:438px;width:1px;height:19px;background:#dadada"></div>
<div style="position:absolute;left:389px;top:438px;width:1px;height:19px;background:#dadada"></div>
<div style="position:absolute;left:453px;top:438px;width:1px;height:19px;background:#dadada"></div>
<div style="position:absolute;left:517px;top:438px;width:1px;height:19px;background:#dadada"></div>
<div style="position:absolute;left:581px;top:438px;width:1px;height:19px;background:#dadada"></div>
<div style="position:absolute;left:645px;top:438px;width:1px;height:19px;background:#dadada"></div>
<div style="position:absolute;left:709px;top:438px;width:1px;height:19px;background:#dadada"></div>
<div style="position:absolute;left:773px;top:438px;width:1px;height:19px;background:#dadada"></div>
<div style="position:absolute;left:1029px;top:438px;width:1px;height:19px;background:#dadada"></div>
<div style="position:absolute;left:174px;top:458px;width:1px;height:19px;background:#dadada"></div>
<div style="position:absolute;left:282px;top:458px;width:1px;height:19px;background:#dadada"></div>
<div style="position:absolute;left:389px;top:458px;width:1px;height:19px;background:#dadada"></div>
<div style="position:absolute;left:453px;top:458px;width:1px;height:19px;background:#dadada"></div>
<div style="position:absolute;left:517px;top:458px;width:1px;height:19px;background:#dadada"></div>
<div style="position:absolute;left:581px;top:458px;width:1px;height:19px;background:#dadada"></div>
<div style="position:absolute;left:645px;top:458px;width:1px;height:19px;background:#dadada"></div>
<div style="position:absolute;left:709px;top:458px;width:1px;height:19px;background:#dadada"></div>
<div style="position:absolute;left:773px;top:458px;width:1px;height:19px;background:#dadada"></div>
<div style="position:absolute;left:1029px;top:458px;width:1px;height:19px;background:#dadada"></div>
<div style="position:absolute;left:174px;top:478px;width:1px;height:19px;background:#dadada"></div>
<div style="position:absolute;left:282px;top:478px;width:1px;height:19px;background:#dadada"></div>
<div style="position:absolute;left:389px;top:478px;width:1px;height:19px;background:#dadada"></div>
<div style="position:absolute;left:453px;top:478px;width:1px;height:19px;background:#dadada"></div>
<div style="position:absolute;left:517px;top:478px;width:1px;height:19px;background:#dadada"></div>
<div style="position:absolute;left:581px;top:478px;width:1px;height:19px;background:#dadada"></div>
<div style="position:absolute;left:645px;top:478px;width:1px;height:19px;background:#dadada"></div>
<div style="position:absolute;left:709px;top:478px;width:1px;height:19px;background:#dadada"></div>
<div style="position:absolute;left:773px;top:478px;width:1px;height:19px;background:#dadada"></div>
<div style="position:absolute;left:1029px;top:478px;width:1px;height:19px;background:#dadada"></div>
<div style="position:absolute;left:174px;top:498px;width:1px;height:19px;background:#dadada"></div>
<div style="position:absolute;left:282px;top:498px;width:1px;height:19px;background:#dadada"></div>
<div style="position:absolute;left:389px;top:498px;width:1px;height:19px;background:#dadada"></div>
<div style="position:absolute;left:453px;top:498px;width:1px;height:19px;background:#dadada"></div>
<div style="position:absolute;left:517px;top:498px;width:1px;height:19px;background:#dadada"></div>
<div style="position:absolute;left:581px;top:498px;width:1px;height:19px;background:#dadada"></div>
<div style="position:absolute;left:645px;top:498px;width:1px;height:19px;background:#dadada"></div>
<div style="position:absolute;left:709px;top:498px;width:1px;height:19px;background:#dadada"></div>
<div style="position:absolute;left:773px;top:498px;width:1px;height:19px;background:#dadada"></div>
<div style="position:absolute;left:1029px;top:498px;width:1px;height:19px;background:#dadada"></div>
<div style="position:absolute;left:174px;top:518px;width:1px;height:19px;background:#dadada"></div>
<div style="position:absolute;left:282px;top:518px;width:1px;height:19px;background:#dadada"></div>
<div style="position:absolute;left:389px;top:518px;width:1px;height:19px;background:#dadada"></div>
<div style="position:absolute;left:453px;top:518px;width:1px;height:19px;background:#dadada"></div>
<div style="position:absolute;left:517px;top:518px;width:1px;height:19px;background:#dadada"></div>
<div style="position:absolute;left:581px;top:518px;width:1px;height:19px;background:#dadada"></div>
<div style="position:absolute;left:645px;top:518px;width:1px;height:19px;background:#dadada"></div>
<div style="position:absolute;left:709px;top:518px;width:1px;height:19px;background:#dadada"></div>
<div style="position:absolute;left:773px;top:518px;width:1px;height:19px;background:#dadada"></div>
<div style="position:absolute;left:1029px;top:518px;width:1px;height:19px;background:#dadada"></div>
<div style="position:absolute;left:174px;top:538px;width:1px;height:19px;background:#dadada"></div>
<div style="position:absolute;left:282px;top:538px;width:1px;height:19px;background:#dadada"></div>
<div style="position:absolute;left:389px;top:538px;width:1px;height:19px;background:#dadada"></div>
<div style="position:absolute;left:453px;top:538px;width:1px;height:19px;background:#dadada"></div>
<div style="position:absolute;left:517px;top:538px;width:1px;height:19px;background:#dadada"></div>
<div style="position:absolute;left:581px;top:538px;width:1px;height:19px;background:#dadada"></div>
<div style="position:absolute;left:645px;top:538px;width:1px;height:19px;background:#dadada"></div>
<div style="position:absolute;left:709px;top:538px;width:1px;height:19px;background:#dadada"></div>
<div style="position:absolute;left:773px;top:538px;width:1px;height:19px;background:#dadada"></div>
<div style="position:absolute;left:1029px;top:538px;width:1px;height:19px;background:#dadada"></div>
<div style="position:absolute;left:174px;top:558px;width:1px;height:19px;background:#dadada"></div>
<div style="position:absolute;left:282px;top:558px;width:1px;height:19px;background:#dadada"></div>
<div style="position:absolute;left:389px;top:558px;width:1px;height:19px;background:#dadada"></div>
<div style="position:absolute;left:453px;top:558px;width:1px;height:19px;background:#dadada"></div>
<div style="position:absolute;left:517px;top:558px;width:1px;height:19px;background:#dadada"></div>
<div style="position:absolute;left:581px;top:558px;width:1px;height:19px;background:#dadada"></div>
<div style="position:absolute;left:645px;top:558px;width:1px;height:19px;background:#dadada"></div>
<div style="position:absolute;left:709px;top:558px;width:1px;height:19px;background:#dadada"></div>
<div style="position:absolute;left:773px;top:558px;width:1px;height:19px;background:#dadada"></div>
<div style="position:absolute;left:1029px;top:558px;width:1px;height:19px;background:#dadada"></div>
<div style="position:absolute;left:174px;top:578px;width:1px;height:19px;background:#dadada"></div>
<div style="position:absolute;left:282px;top:578px;width:1px;height:19px;background:#dadada"></div>
<div style="position:absolute;left:389px;top:578px;width:1px;height:19px;background:#dadada"></div>
<div style="position:absolute;left:453px;top:578px;width:1px;height:19px;background:#dadada"></div>
<div style="position:absolute;left:517px;top:578px;width:1px;height:19px;background:#dadada"></div>
<div style="position:absolute;left:581px;top:578px;width:1px;height:19px;background:#dadada"></div>
<div style="position:absolute;left:645px;top:578px;width:1px;height:19px;background:#dadada"></div>
<div style="position:absolute;left:709px;top:578px;width:1px;height:19px;background:#dadada"></div>
<div style="position:absolute;left:773px;top:578px;width:1px;height:19px;background:#dadada"></div>
<div style="position:absolute;left:1029px;top:578px;width:1px;height:19px;background:#dadada"></div>
<div style="position:absolute;left:174px;top:598px;width:1px;height:19px;background:#dadada"></div>
<div style="position:absolute;left:282px;top:598px;width:1px;height:19px;background:#dadada"></div>
<div style="position:absolute;left:389px;top:598px;width:1px;height:19px;background:#dadada"></div>
<div style="position:absolute;left:453px;top:598px;width:1px;height:19px;background:#dadada"></div>
<div style="position:absolute;left:517px;top:598px;width:1px;height:19px;background:#dadada"></div>
<div style="position:absolute;left:581px;top:598px;width:1px;height:19px;background:#dadada"></div>
<div style="position:absolute;left:645px;top:598px;width:1px;height:19px;background:#dadada"></div>
<div style="position:absolute;left:709px;top:598px;width:1px;height:19px;background:#dadada"></div>
<div style="position:absolute;left:773px;top:598px;width:1px;height:19px;background:#dadada"></div>
<div style="position:absolute;left:1029px;top:598px;width:1px;height:19px;background:#dadada"></div>
<div style="position:absolute;left:174px;top:618px;width:1px;height:19px;background:#dadada"></div>
<div style="position:absolute;left:282px;top:618px;width:1px;height:19px;background:#dadada"></div>
<div style="position:absolute;left:389px;top:618px;width:1px;height:19px;background:#dadada"></div>
<div style="position:absolute;left:453px;top:618px;width:1px;height:19px;background:#dadada"></div>
<div style="position:absolute;left:517px;top:618px;width:1px;height:19px;background:#dadada"></div>
<div style="position:absolute;left:581px;top:618px;width:1px;height:19px;background:#dadada"></div>
<div style="position:absolute;left:645px;top:618px;width:1px;height:19px;background:#dadada"></div>
<div style="position:absolute;left:709px;top:618px;width:1px;height:19px;background:#dadada"></div>
<div style="position:absolute;left:773px;top:618px;width:1px;height:19px;background:#dadada"></div>
<div style="position:absolute;left:1029px;top:618px;width:1px;height:19px;background:#dadada"></div>
<div style="position:absolute;left:174px;top:638px;width:1px;height:19px;background:#dadada"></div>
<div style="position:absolute;left:282px;top:638px;width:1px;height:19px;background:#dadada"></div>
<div style="position:absolute;left:389px;top:638px;width:1px;height:19px;background:#dadada"></div>
<div style="position:absolute;left:453px;top:638px;width:1px;height:19px;background:#dadada"></div>
<div style="position:absolute;left:517px;top:638px;width:1px;height:19px;background:#dadada"></div>
<div style="position:absolute;left:581px;top:638px;width:1px;height:19px;background:#dadada"></div>
<div style="position:absolute;left:645px;top:638px;width:1px;height:19px;background:#dadada"></div>
<div style="position:absolute;left:709px;top:638px;width:1px;height:19px;background:#dadada"></div>
<div style="position:absolute;left:773px;top:638px;width:1px;height:19px;background:#dadada"></div>
<div style="position:absolute;left:1029px;top:638px;width:1px;height:19px;background:#dadada"></div>
<div style="position:absolute;left:174px;top:658px;width:1px;height:19px;background:#dadada"></div>
<div style="position:absolute;left:282px;top:658px;width:1px;height:19px;background:#dadada"></div>
<div style="position:absolute;left:389px;top:658px;width:1px;height:19px;background:#dadada"></div>
<div style="position:absolute;left:453px;top:658px;width:1px;height:19px;background:#dadada"></div>
<div style="position:absolute;left:517px;top:658px;width:1px;height:19px;background:#dadada"></div>
<div style="position:absolute;left:581px;top:658px;width:1px;height:19px;background:#dadada"></div>
<div style="position:absolute;left:645px;top:658px;width:1px;height:19px;background:#dadada"></div>
<div style="position:absolute;left:709px;top:658px;width:1px;height:19px;background:#dadada"></div>
<div style="position:absolute;left:773px;top:658px;width:1px;height:19px;background:#dadada"></div>
<div style="position:absolute;left:1029px;top:658px;width:1px;height:19px;background:#dadada"></div>
<div style="position:absolute;left:25px;top:218px;width:1px;height:460px;background:#ababab"></div>
<div style="position:absolute;left:24px;top:278px;width:2px;height:20px;background:#217346"></div>
<div id="t59" class="t cell" style="position:absolute;left:-37.5px;width:100px;text-align:center;top:222.42px;font-size:12.5px;line-height:12.5px;color:#222;font-weight:normal;white-space:nowrap;">1</div>
<div id="t60" class="t cell" style="position:absolute;left:-37.5px;width:100px;text-align:center;top:242.42px;font-size:12.5px;line-height:12.5px;color:#222;font-weight:normal;white-space:nowrap;">2</div>
<div id="t61" class="t cell" style="position:absolute;left:-37.5px;width:100px;text-align:center;top:262.42px;font-size:12.5px;line-height:12.5px;color:#222;font-weight:normal;white-space:nowrap;">3</div>
<div id="t62" class="t cell" style="position:absolute;left:-37.5px;width:100px;text-align:center;top:282.42px;font-size:12.5px;line-height:12.5px;color:#217346;font-weight:normal;white-space:nowrap;">4</div>
<div id="t63" class="t cell" style="position:absolute;left:-37.5px;width:100px;text-align:center;top:302.42px;font-size:12.5px;line-height:12.5px;color:#222;font-weight:normal;white-space:nowrap;">5</div>
<div id="t64" class="t cell" style="position:absolute;left:-37.5px;width:100px;text-align:center;top:322.42px;font-size:12.5px;line-height:12.5px;color:#222;font-weight:normal;white-space:nowrap;">6</div>
<div id="t65" class="t cell" style="position:absolute;left:-37.5px;width:100px;text-align:center;top:342.42px;font-size:12.5px;line-height:12.5px;color:#222;font-weight:normal;white-space:nowrap;">7</div>
<div id="t66" class="t cell" style="position:absolute;left:-37.5px;width:100px;text-align:center;top:362.42px;font-size:12.5px;line-height:12.5px;color:#222;font-weight:normal;white-space:nowrap;">8</div>
<div id="t67" class="t cell" style="position:absolute;left:-37.5px;width:100px;text-align:center;top:382.42px;font-size:12.5px;line-height:12.5px;color:#222;font-weight:normal;white-space:nowrap;">9</div>
<div id="t68" class="t cell" style="position:absolute;left:-37.5px;width:100px;text-align:center;top:402.42px;font-size:12.5px;line-height:12.5px;color:#222;font-weight:normal;white-space:nowrap;">10</div>
<div id="t69" class="t cell" style="position:absolute;left:-37.5px;width:100px;text-align:center;top:422.42px;font-size:12.5px;line-height:12.5px;color:#222;font-weight:normal;white-space:nowrap;">11</div>
<div id="t70" class="t cell" style="position:absolute;left:-37.5px;width:100px;text-align:center;top:442.42px;font-size:12.5px;line-height:12.5px;color:#222;font-weight:normal;white-space:nowrap;">12</div>
<div id="t71" class="t cell" style="position:absolute;left:-37.5px;width:100px;text-align:center;top:462.42px;font-size:12.5px;line-height:12.5px;color:#222;font-weight:normal;white-space:nowrap;">13</div>
<div id="t72" class="t cell" style="position:absolute;left:-37.5px;width:100px;text-align:center;top:482.42px;font-size:12.5px;line-height:12.5px;color:#222;font-weight:normal;white-space:nowrap;">14</div>
<div id="t73" class="t cell" style="position:absolute;left:-37.5px;width:100px;text-align:center;top:502.42px;font-size:12.5px;line-height:12.5px;color:#222;font-weight:normal;white-space:nowrap;">15</div>
<div id="t74" class="t cell" style="position:absolute;left:-37.5px;width:100px;text-align:center;top:522.42px;font-size:12.5px;line-height:12.5px;color:#222;font-weight:normal;white-space:nowrap;">16</div>
<div id="t75" class="t cell" style="position:absolute;left:-37.5px;width:100px;text-align:center;top:542.42px;font-size:12.5px;line-height:12.5px;color:#222;font-weight:normal;white-space:nowrap;">17</div>
<div id="t76" class="t cell" style="position:absolute;left:-37.5px;width:100px;text-align:center;top:562.42px;font-size:12.5px;line-height:12.5px;color:#222;font-weight:normal;white-space:nowrap;">18</div>
<div id="t77" class="t cell" style="position:absolute;left:-37.5px;width:100px;text-align:center;top:582.42px;font-size:12.5px;line-height:12.5px;color:#222;font-weight:normal;white-space:nowrap;">19</div>
<div id="t78" class="t cell" style="position:absolute;left:-37.5px;width:100px;text-align:center;top:602.42px;font-size:12.5px;line-height:12.5px;color:#222;font-weight:normal;white-space:nowrap;">20</div>
<div id="t79" class="t cell" style="position:absolute;left:-37.5px;width:100px;text-align:center;top:622.42px;font-size:12.5px;line-height:12.5px;color:#222;font-weight:normal;white-space:nowrap;">21</div>
<div id="t80" class="t cell" style="position:absolute;left:-37.5px;width:100px;text-align:center;top:642.42px;font-size:12.5px;line-height:12.5px;color:#222;font-weight:normal;white-space:nowrap;">22</div>
<div id="t81" class="t cell" style="position:absolute;left:-37.5px;width:100px;text-align:center;top:662.42px;font-size:12.5px;line-height:12.5px;color:#222;font-weight:normal;white-space:nowrap;">23</div>
<div id="t82" class="t cell" style="position:absolute;left:28.3px;top:221.66px;font-size:13.4px;line-height:13.4px;color:#000;font-weight:normal;white-space:nowrap;transform:scaleX(1.0040);transform-origin:0 0;">File List of C:\Users</div>
<div id="t83" class="t cell" style="position:absolute;left:28.3px;top:261.66px;font-size:13.4px;line-height:13.4px;color:#000;font-weight:normal;white-space:nowrap;transform:scaleX(1.0046);transform-origin:0 0;">Name</div>
<div id="t84" class="t cell" style="position:absolute;left:28.3px;top:281.66px;font-size:13.4px;line-height:13.4px;color:#000;font-weight:normal;white-space:nowrap;transform:scaleX(0.9929);transform-origin:0 0;">All Users</div>
<div id="t85" class="t cell" style="position:absolute;left:28.3px;top:301.66px;font-size:13.4px;line-height:13.4px;color:#000;font-weight:normal;white-space:nowrap;transform:scaleX(1.0357);transform-origin:0 0;">Application Data</div>
<div id="t86" class="t cell" style="position:absolute;left:28.3px;top:321.66px;font-size:13.4px;line-height:13.4px;color:#000;font-weight:normal;white-space:nowrap;transform:scaleX(1.0391);transform-origin:0 0;">History</div>
<div id="t87" class="t cell" style="position:absolute;left:28.3px;top:341.66px;font-size:13.4px;line-height:13.4px;color:#000;font-weight:normal;white-space:nowrap;transform:scaleX(1.0406);transform-origin:0 0;">DefaultLayouts.xml</div>
<div id="t88" class="t cell" style="position:absolute;left:28.3px;top:361.66px;font-size:13.4px;line-height:13.4px;color:#000;font-weight:normal;white-space:nowrap;transform:scaleX(1.0713);transform-origin:0 0;">Temporary Internet</div>
<div id="t89" class="t cell" style="position:absolute;left:28.3px;top:381.66px;font-size:13.4px;line-height:13.4px;color:#000;font-weight:normal;white-space:nowrap;transform:scaleX(1.0189);transform-origin:0 0;">1 - Desktop.lnk</div>
<div id="t90" class="t cell" style="position:absolute;left:28.3px;top:401.66px;font-size:13.4px;line-height:13.4px;color:#000;font-weight:normal;white-space:nowrap;transform:scaleX(1.0729);transform-origin:0 0;">desktop.ini</div>
<div id="t91" class="t cell" style="position:absolute;left:28.3px;top:421.66px;font-size:13.4px;line-height:13.4px;color:#000;font-weight:normal;white-space:nowrap;transform:scaleX(0.9884);transform-origin:0 0;">1 - Run.lnk</div>
<div id="t92" class="t cell" style="position:absolute;left:28.3px;top:441.66px;font-size:13.4px;line-height:13.4px;color:#000;font-weight:normal;white-space:nowrap;transform:scaleX(0.9815);transform-origin:0 0;">2 - Search.lnk</div>
<div id="t93" class="t cell" style="position:absolute;left:28.3px;top:461.66px;font-size:13.4px;line-height:13.4px;color:#000;font-weight:normal;white-space:nowrap;transform:scaleX(1.0155);transform-origin:0 0;">3 - Windows Explore</div>
<div id="t94" class="t cell" style="position:absolute;left:28.3px;top:481.66px;font-size:13.4px;line-height:13.4px;color:#000;font-weight:normal;white-space:nowrap;transform:scaleX(1.0303);transform-origin:0 0;">4 - Control Panel.lnk</div>
<div id="t95" class="t cell" style="position:absolute;left:28.3px;top:501.66px;font-size:13.4px;line-height:13.4px;color:#000;font-weight:normal;white-space:nowrap;transform:scaleX(1.0137);transform-origin:0 0;">5 - Task Manager.lnk</div>
<div id="t96" class="t cell" style="position:absolute;left:28.3px;top:521.66px;font-size:13.4px;line-height:13.4px;color:#000;font-weight:normal;white-space:nowrap;transform:scaleX(1.0729);transform-origin:0 0;">desktop.ini</div>
<div id="t97" class="t cell" style="position:absolute;left:28.3px;top:541.66px;font-size:13.4px;line-height:13.4px;color:#000;font-weight:normal;white-space:nowrap;transform:scaleX(0.9873);transform-origin:0 0;">01 - Command Prom</div>
<div id="t98" class="t cell" style="position:absolute;left:28.3px;top:561.66px;font-size:13.4px;line-height:13.4px;color:#000;font-weight:normal;white-space:nowrap;transform:scaleX(0.9914);transform-origin:0 0;">01a - Windows Powe</div>
<div id="t99" class="t cell" style="position:absolute;left:28.3px;top:581.66px;font-size:13.4px;line-height:13.4px;color:#000;font-weight:normal;white-space:nowrap;transform:scaleX(0.9873);transform-origin:0 0;">02 - Command Prom</div>
<div id="t100" class="t cell" style="position:absolute;left:28.3px;top:601.66px;font-size:13.4px;line-height:13.4px;color:#000;font-weight:normal;white-space:nowrap;transform:scaleX(0.9914);transform-origin:0 0;">02a - Windows Powe</div>
<div id="t101" class="t cell" style="position:absolute;left:28.3px;top:621.66px;font-size:13.4px;line-height:13.4px;color:#000;font-weight:normal;white-space:nowrap;transform:scaleX(0.9950);transform-origin:0 0;">03 - Computer Mana</div>
<div id="t102" class="t cell" style="position:absolute;left:28.3px;top:641.66px;font-size:13.4px;line-height:13.4px;color:#000;font-weight:normal;white-space:nowrap;transform:scaleX(0.9972);transform-origin:0 0;">04 - Disk Manageme</div>
<div id="t103" class="t cell" style="position:absolute;left:28.3px;top:661.66px;font-size:13.4px;line-height:13.4px;color:#000;font-weight:normal;white-space:nowrap;transform:scaleX(1.0262);transform-origin:0 0;">04-1 - NetworkStatu</div>
<div id="t104" class="t cellj" style="position:absolute;left:806.3px;top:341.66px;font-size:13.4px;line-height:13.4px;color:#000;font-weight:normal;white-space:nowrap;transform:scaleX(1.0870);transform-origin:0 0;">crosoft\Windows\Shell</div>
<div id="t105" class="t cellj" style="position:absolute;left:806.3px;top:361.66px;font-size:13.4px;line-height:13.4px;color:#000;font-weight:normal;white-space:nowrap;transform:scaleX(1.0801);transform-origin:0 0;">crosoft\Windows</div>
<div id="t106" class="t cellj" style="position:absolute;left:806.3px;top:381.66px;font-size:13.4px;line-height:13.4px;color:#000;font-weight:normal;white-space:nowrap;transform:scaleX(1.0788);transform-origin:0 0;">crosoft\Windows\WinX\Group1</div>
<div id="t107" class="t cellj" style="position:absolute;left:806.3px;top:401.66px;font-size:13.4px;line-height:13.4px;color:#000;font-weight:normal;white-space:nowrap;transform:scaleX(1.0788);transform-origin:0 0;">crosoft\Windows\WinX\Group1</div>
<div id="t108" class="t cellj" style="position:absolute;left:806.3px;top:421.66px;font-size:13.4px;line-height:13.4px;color:#000;font-weight:normal;white-space:nowrap;transform:scaleX(1.0788);transform-origin:0 0;">crosoft\Windows\WinX\Group2</div>
<div id="t109" class="t cellj" style="position:absolute;left:806.3px;top:441.66px;font-size:13.4px;line-height:13.4px;color:#000;font-weight:normal;white-space:nowrap;transform:scaleX(1.0788);transform-origin:0 0;">crosoft\Windows\WinX\Group2</div>
<div id="t110" class="t cellj" style="position:absolute;left:806.3px;top:461.66px;font-size:13.4px;line-height:13.4px;color:#000;font-weight:normal;white-space:nowrap;transform:scaleX(1.0788);transform-origin:0 0;">crosoft\Windows\WinX\Group2</div>
<div id="t111" class="t cellj" style="position:absolute;left:806.3px;top:481.66px;font-size:13.4px;line-height:13.4px;color:#000;font-weight:normal;white-space:nowrap;transform:scaleX(1.0788);transform-origin:0 0;">crosoft\Windows\WinX\Group2</div>
<div id="t112" class="t cellj" style="position:absolute;left:806.3px;top:501.66px;font-size:13.4px;line-height:13.4px;color:#000;font-weight:normal;white-space:nowrap;transform:scaleX(1.0788);transform-origin:0 0;">crosoft\Windows\WinX\Group2</div>
<div id="t113" class="t cellj" style="position:absolute;left:806.3px;top:521.66px;font-size:13.4px;line-height:13.4px;color:#000;font-weight:normal;white-space:nowrap;transform:scaleX(1.0788);transform-origin:0 0;">crosoft\Windows\WinX\Group2</div>
<div id="t114" class="t cellj" style="position:absolute;left:806.3px;top:541.66px;font-size:13.4px;line-height:13.4px;color:#000;font-weight:normal;white-space:nowrap;transform:scaleX(1.0788);transform-origin:0 0;">crosoft\Windows\WinX\Group3</div>
<div id="t115" class="t cellj" style="position:absolute;left:806.3px;top:561.66px;font-size:13.4px;line-height:13.4px;color:#000;font-weight:normal;white-space:nowrap;transform:scaleX(1.0788);transform-origin:0 0;">crosoft\Windows\WinX\Group3</div>
<div id="t116" class="t cellj" style="position:absolute;left:806.3px;top:581.66px;font-size:13.4px;line-height:13.4px;color:#000;font-weight:normal;white-space:nowrap;transform:scaleX(1.0788);transform-origin:0 0;">crosoft\Windows\WinX\Group3</div>
<div id="t117" class="t cellj" style="position:absolute;left:806.3px;top:601.66px;font-size:13.4px;line-height:13.4px;color:#000;font-weight:normal;white-space:nowrap;transform:scaleX(1.0788);transform-origin:0 0;">crosoft\Windows\WinX\Group3</div>
<div id="t118" class="t cellj" style="position:absolute;left:806.3px;top:621.66px;font-size:13.4px;line-height:13.4px;color:#000;font-weight:normal;white-space:nowrap;transform:scaleX(1.0788);transform-origin:0 0;">crosoft\Windows\WinX\Group3</div>
<div id="t119" class="t cellj" style="position:absolute;left:806.3px;top:641.66px;font-size:13.4px;line-height:13.4px;color:#000;font-weight:normal;white-space:nowrap;transform:scaleX(1.0788);transform-origin:0 0;">crosoft\Windows\WinX\Group3</div>
<div id="t120" class="t cellj" style="position:absolute;left:806.3px;top:661.66px;font-size:13.4px;line-height:13.4px;color:#000;font-weight:normal;white-space:nowrap;transform:scaleX(1.0788);transform-origin:0 0;">crosoft\Windows\WinX\Group3</div>
<div style="position:absolute;left:0px;top:678px;width:1032px;height:28px;background:#e6e6e6"></div>
<div style="position:absolute;left:0px;top:706px;width:1032px;height:1px;background:#c6c6c6"></div>
<svg style="position:absolute;left:27px;top:688px;" width="5" height="7" viewBox="0 0 5 7"><path d="M5 0v7L0 3.5z" fill="#bbb"/></svg>
<svg style="position:absolute;left:56px;top:688px;" width="5" height="7" viewBox="0 0 5 7"><path d="M0 0v7l5-3.5z" fill="#bbb"/></svg>
<div style="position:absolute;left:0px;top:677px;width:1032px;height:1px;background:#c8c8c8"></div>
<div style="position:absolute;left:100px;top:678px;width:43px;height:25px;background:#fff;border:1px solid #b0b0b0;border-top:none;box-sizing:border-box"></div>
<div style="position:absolute;left:100px;top:701px;width:43px;height:2px;background:#217346"></div>
<div id="t121" class="t " style="position:absolute;left:113px;top:684.70px;font-size:13px;line-height:13px;color:#217346;font-weight:bold;white-space:nowrap;transform:scaleX(0.9576);transform-origin:0 0;">list</div>
<div style="position:absolute;left:819px;top:687px;width:2px;height:2px;background:#aaa"></div>
<div style="position:absolute;left:819px;top:691px;width:2px;height:2px;background:#aaa"></div>
<div style="position:absolute;left:819px;top:695px;width:2px;height:2px;background:#aaa"></div>
<div style="position:absolute;left:836px;top:685px;width:196px;height:15px;background:#fff;border:1px solid #c6c6c6;border-right:none;box-sizing:border-box"></div>
<div style="position:absolute;left:851px;top:686px;width:1px;height:13px;background:#c6c6c6"></div>
<svg style="position:absolute;left:841px;top:688px;" width="5" height="8" viewBox="0 0 5 8"><path d="M5 0v8L0 4z" fill="#555"/></svg>
<div style="position:absolute;left:0px;top:707px;width:1032px;height:21px;background:#f1f1f1"></div>
<div id="t122" class="t " style="position:absolute;left:7.4px;top:711.24px;font-size:12px;line-height:12px;color:#444;font-weight:normal;white-space:nowrap;transform:scaleX(0.9713);transform-origin:0 0;">Готово</div>
<div style="position:absolute;left:151px;top:236px;width:654px;height:472px;background:#fff;border:1px solid #b4b4b4;box-sizing:border-box;box-shadow:0 1px 4px rgba(0,0,0,0.15)"></div>
<div id="t123" class="t dlg" style="position:absolute;left:429px;top:244.43px;font-size:14.5px;line-height:14.5px;color:#333;font-weight:normal;white-space:nowrap;transform:scaleX(1.0415);transform-origin:0 0;">Формат ячеек</div>
<div id="t124" class="t dlg" style="position:absolute;left:736px;top:242.84px;font-size:12px;line-height:12px;color:#222;font-weight:bold;white-space:nowrap;">?</div>
<div style="position:absolute;left:753px;top:237px;width:45px;height:20px;background:#c75050"></div>
<svg style="position:absolute;left:769px;top:241px;" width="12" height="12" viewBox="0 0 12 12"><path d="M1.5 1.5l9 9M10.5 1.5l-9 9" stroke="#fff" stroke-width="1.5"/></svg>
<div style="position:absolute;left:158px;top:266px;width:640px;height:435px;background:#f0f0f0;border:1px solid #dcdcdc;box-sizing:border-box"></div>
<div style="position:absolute;left:165px;top:295px;width:624px;height:366px;background:#fff;border:1px solid #acacac;box-sizing:border-box"></div>
<div style="position:absolute;left:221px;top:276px;width:97px;height:20px;background:linear-gradient(#f0f0f0,#e5e5e5);border:1px solid #acacac;box-sizing:border-box"></div>
<div style="position:absolute;left:317px;top:276px;width:58px;height:20px;background:linear-gradient(#f0f0f0,#e5e5e5);border:1px solid #acacac;box-sizing:border-box"></div>
<div style="position:absolute;left:374px;top:276px;width:64px;height:20px;background:linear-gradient(#f0f0f0,#e5e5e5);border:1px solid #acacac;box-sizing:border-box"></div>
<div style="position:absolute;left:437px;top:276px;width:61px;height:20px;background:linear-gradient(#f0f0f0,#e5e5e5);border:1px solid #acacac;box-sizing:border-box"></div>
<div style="position:absolute;left:497px;top:276px;width:57px;height:20px;background:linear-gradient(#f0f0f0,#e5e5e5);border:1px solid #acacac;box-sizing:border-box"></div>
<div id="t125" class="t dlg" style="position:absolute;left:228px;top:281.69px;font-size:11px;line-height:11px;color:#000;font-weight:normal;white-space:nowrap;transform:scaleX(1.0513);transform-origin:0 0;">Выравнивание</div>
<div id="t126" class="t dlg" style="position:absolute;left:326.4px;top:281.69px;font-size:11px;line-height:11px;color:#000;font-weight:normal;white-space:nowrap;transform:scaleX(1.0579);transform-origin:0 0;">Шрифт</div>
<div id="t127" class="t dlg" style="position:absolute;left:383.3px;top:281.69px;font-size:11px;line-height:11px;color:#000;font-weight:normal;white-space:nowrap;transform:scaleX(1.0422);transform-origin:0 0;">Граница</div>
<div id="t128" class="t dlg" style="position:absolute;left:445.7px;top:281.69px;font-size:11px;line-height:11px;color:#000;font-weight:normal;white-space:nowrap;transform:scaleX(0.9990);transform-origin:0 0;">Заливка</div>
<div id="t129" class="t dlg" style="position:absolute;left:506.3px;top:281.69px;font-size:11px;line-height:11px;color:#000;font-weight:normal;white-space:nowrap;transform:scaleX(0.9667);transform-origin:0 0;">Защита</div>
<div style="position:absolute;left:165px;top:274px;width:56px;height:22px;background:#fff;border:1px solid #acacac;border-bottom:none;box-sizing:border-box"></div>
<div style="position:absolute;left:169px;top:278px;width:47px;height:16px;border:1px dotted #000;box-sizing:border-box"></div>
<div id="t130" class="t dlg" style="position:absolute;left:176.6px;top:280.69px;font-size:11px;line-height:11px;color:#000;font-weight:normal;white-space:nowrap;transform:scaleX(0.9798);transform-origin:0 0;">Число</div>
<div id="t131" class="t dlg" style="position:absolute;left:174.5px;top:306.19px;font-size:11px;line-height:11px;color:#000;font-weight:normal;white-space:nowrap;transform:scaleX(1.0114);transform-origin:0 0;">Числовые форматы:</div>
<div style="position:absolute;left:174.5px;top:317px;width:7px;height:1px;background:#000"></div>
<div style="position:absolute;left:174px;top:321px;width:138px;height:251px;background:#fff;border:1px solid #828790;box-sizing:border-box"></div>
<div style="position:absolute;left:294px;top:322px;width:17px;height:249px;background:#f0f0f0"></div>
<svg style="position:absolute;left:298px;top:329px;" width="9" height="6" viewBox="0 0 9 6"><path d="M0.5 5L4.5 1l4 4" fill="none" stroke="#c0c0c0" stroke-width="1.5"/></svg>
<svg style="position:absolute;left:298px;top:559px;" width="9" height="6" viewBox="0 0 9 6"><path d="M0.5 1l4 4 4-4" fill="none" stroke="#c0c0c0" stroke-width="1.5"/></svg>
<div style="position:absolute;left:176px;top:466px;width:117px;height:13px;background:#3399ff"></div>
<div id="t132" class="t dlg" style="position:absolute;left:178.5px;top:324.69px;font-size:11px;line-height:11px;color:#000;font-weight:normal;white-space:nowrap;transform:scaleX(1.0717);transform-origin:0 0;">Общий</div>
<div id="t133" class="t dlg" style="position:absolute;left:178.5px;top:337.69px;font-size:11px;line-height:11px;color:#000;font-weight:normal;white-space:nowrap;transform:scaleX(1.0317);transform-origin:0 0;">Числовой</div>
<div id="t134" class="t dlg" style="position:absolute;left:178.5px;top:350.69px;font-size:11px;line-height:11px;color:#000;font-weight:normal;white-space:nowrap;transform:scaleX(1.0805);transform-origin:0 0;">Денежный</div>
<div id="t135" class="t dlg" style="position:absolute;left:178.5px;top:363.69px;font-size:11px;line-height:11px;color:#000;font-weight:normal;white-space:nowrap;transform:scaleX(1.0354);transform-origin:0 0;">Финансовый</div>
<div id="t136" class="t dlg" style="position:absolute;left:178.5px;top:376.69px;font-size:11px;line-height:11px;color:#000;font-weight:normal;white-space:nowrap;transform:scaleX(1.0181);transform-origin:0 0;">Дата</div>
<div id="t137" class="t dlg" style="position:absolute;left:178.5px;top:389.69px;font-size:11px;line-height:11px;color:#000;font-weight:normal;white-space:nowrap;transform:scaleX(1.0123);transform-origin:0 0;">Время</div>
<div id="t138" class="t dlg" style="position:absolute;left:178.5px;top:402.69px;font-size:11px;line-height:11px;color:#000;font-weight:normal;white-space:nowrap;transform:scaleX(1.0709);transform-origin:0 0;">Процентный</div>
<div id="t139" class="t dlg" style="position:absolute;left:178.5px;top:415.69px;font-size:11px;line-height:11px;color:#000;font-weight:normal;white-space:nowrap;transform:scaleX(1.0949);transform-origin:0 0;">Дробный</div>
<div id="t140" class="t dlg" style="position:absolute;left:178.5px;top:428.69px;font-size:11px;line-height:11px;color:#000;font-weight:normal;white-space:nowrap;transform:scaleX(1.0590);transform-origin:0 0;">Экспоненциальный</div>
<div id="t141" class="t dlg" style="position:absolute;left:178.5px;top:441.69px;font-size:11px;line-height:11px;color:#000;font-weight:normal;white-space:nowrap;transform:scaleX(1.0132);transform-origin:0 0;">Текстовый</div>
<div id="t142" class="t dlg" style="position:absolute;left:178.5px;top:454.69px;font-size:11px;line-height:11px;color:#000;font-weight:normal;white-space:nowrap;transform:scaleX(1.0745);transform-origin:0 0;">Дополнительный</div>
<div id="t143" class="t dlg" style="position:absolute;left:178.5px;top:467.69px;font-size:11px;line-height:11px;color:#fff;font-weight:normal;white-space:nowrap;transform:scaleX(1.0081);transform-origin:0 0;">(все форматы)</div>
<div style="position:absolute;left:321px;top:327px;width:460px;height:33px;border:1px solid #dcdcdc;box-sizing:border-box"></div>
<div style="position:absolute;left:326px;top:322px;width:50px;height:10px;background:#fff"></div>
<div id="t144" class="t dlg" style="position:absolute;left:327.7px;top:322.99px;font-size:11px;line-height:11px;color:#000;font-weight:normal;white-space:nowrap;transform:scaleX(1.0449);transform-origin:0 0;">Образец</div>
<div id="t145" class="t dlg" style="position:absolute;left:330px;top:342.49px;font-size:11px;line-height:11px;color:#000;font-weight:normal;white-space:nowrap;transform:scaleX(0.9807);transform-origin:0 0;">07.12.2019 9:20</div>
<div id="t146" class="t dlg" style="position:absolute;left:321.5px;top:365.49px;font-size:11px;line-height:11px;color:#000;font-weight:normal;white-space:nowrap;">Тип:</div>
<div style="position:absolute;left:328px;top:376.5px;width:6px;height:1px;background:#000"></div>
<div style="position:absolute;left:321px;top:380px;width:461px;height:20px;background:#fff;border:1px solid #abadb3;border-bottom:2px solid #7a7a7a;box-sizing:border-box"></div>
<div id="t147" class="t dlg" style="position:absolute;left:325px;top:385.19px;font-size:11px;line-height:11px;color:#000;font-weight:normal;white-space:nowrap;transform:scaleX(1.0040);transform-origin:0 0;">ДД.ММ.ГГГГ ч:мм</div>
<div style="position:absolute;left:321px;top:399px;width:461px;height:148px;background:#fff;border:1px solid #828790;border-top:none;box-sizing:border-box"></div>
<div style="position:absolute;left:764px;top:402px;width:16px;height:143px;background:#f0f0f0"></div>
<div style="position:absolute;left:764px;top:481px;width:15px;height:32px;background:#cdcdcd"></div>
<svg style="position:absolute;left:767px;top:407px;" width="10" height="6" viewBox="0 0 10 6"><path d="M1 5.5L5 1.5l4 4" fill="none" stroke="#606060" stroke-width="1.6"/></svg>
<svg style="position:absolute;left:767px;top:534px;" width="10" height="6" viewBox="0 0 10 6"><path d="M1 0.5l4 4 4-4" fill="none" stroke="#606060" stroke-width="1.6"/></svg>
<div style="position:absolute;left:322px;top:480px;width:441px;height:13px;background:#3399ff"></div>
<div id="t148" class="t dlg" style="position:absolute;left:325px;top:403.69px;font-size:11px;line-height:11px;color:#000;font-weight:normal;white-space:nowrap;transform:scaleX(1.0670);transform-origin:0 0;">ДД.МММ</div>
<div id="t149" class="t dlg" style="position:absolute;left:325px;top:416.69px;font-size:11px;line-height:11px;color:#000;font-weight:normal;white-space:nowrap;transform:scaleX(1.0408);transform-origin:0 0;">МММ.ГГ</div>
<div id="t150" class="t dlg" style="position:absolute;left:325px;top:429.69px;font-size:11px;line-height:11px;color:#000;font-weight:normal;white-space:nowrap;transform:scaleX(1.0328);transform-origin:0 0;">ч:мм AM/PM</div>
<div id="t151" class="t dlg" style="position:absolute;left:325px;top:442.69px;font-size:11px;line-height:11px;color:#000;font-weight:normal;white-space:nowrap;transform:scaleX(1.0143);transform-origin:0 0;">ч:мм:сс AM/PM</div>
<div id="t152" class="t dlg" style="position:absolute;left:325px;top:455.69px;font-size:11px;line-height:11px;color:#000;font-weight:normal;white-space:nowrap;transform:scaleX(1.0576);transform-origin:0 0;">ч:мм</div>
<div id="t153" class="t dlg" style="position:absolute;left:325px;top:468.69px;font-size:11px;line-height:11px;color:#000;font-weight:normal;white-space:nowrap;transform:scaleX(1.0114);transform-origin:0 0;">ч:мм:сс</div>
<div id="t154" class="t dlg" style="position:absolute;left:325px;top:481.69px;font-size:11px;line-height:11px;color:#fff;font-weight:normal;white-space:nowrap;transform:scaleX(1.0095);transform-origin:0 0;">ДД.ММ.ГГГГ ч:мм</div>
<div id="t155" class="t dlg" style="position:absolute;left:325px;top:494.69px;font-size:11px;line-height:11px;color:#000;font-weight:normal;white-space:nowrap;transform:scaleX(1.0347);transform-origin:0 0;">мм:сс</div>
<div id="t156" class="t dlg" style="position:absolute;left:325px;top:507.69px;font-size:11px;line-height:11px;color:#000;font-weight:normal;white-space:nowrap;transform:scaleX(1.0115);transform-origin:0 0;">мм:сс,0</div>
<div id="t157" class="t dlg" style="position:absolute;left:325px;top:520.69px;font-size:11px;line-height:11px;color:#000;font-weight:normal;white-space:nowrap;transform:scaleX(0.9846);transform-origin:0 0;">@</div>
<div id="t158" class="t dlg" style="position:absolute;left:325px;top:533.69px;font-size:11px;line-height:11px;color:#000;font-weight:normal;white-space:nowrap;transform:scaleX(1.0500);transform-origin:0 0;">[ч]:мм:сс</div>
<div style="position:absolute;left:707px;top:553px;width:74px;height:22px;background:#e8e8e8;border:1px solid #d0d0d0;box-sizing:border-box"></div>
<div id="t159" class="t dlg" style="position:absolute;left:723px;top:558.49px;font-size:11px;line-height:11px;color:#a0a0a0;font-weight:normal;white-space:nowrap;transform:scaleX(1.0000);transform-origin:0 0;">Удалить</div>
<div id="t160" class="t dlg" style="position:absolute;left:174.4px;top:588.99px;font-size:11px;line-height:11px;color:#000;font-weight:normal;white-space:nowrap;transform:scaleX(1.0434);transform-origin:0 0;">Введите код числового формата, используя один из существующих кодов в качестве образца.</div>
<div style="position:absolute;left:632px;top:670px;width:74px;height:22px;background:#e5e5e5;border:1px solid #3399ff;box-sizing:border-box"></div>
<div id="t161" class="t dlg" style="position:absolute;left:661.4px;top:675.79px;font-size:11px;line-height:11px;color:#000;font-weight:normal;white-space:nowrap;transform:scaleX(0.9887);transform-origin:0 0;">ОК</div>
<div style="position:absolute;left:716px;top:670px;width:74px;height:22px;background:#e5e5e5;border:1px solid #adadad;box-sizing:border-box"></div>
<div id="t162" class="t dlg" style="position:absolute;left:732.7px;top:675.79px;font-size:11px;line-height:11px;color:#000;font-weight:normal;white-space:nowrap;transform:scaleX(1.0084);transform-origin:0 0;">Отмена</div>
<svg style="position:absolute;left:555px;top:625px;" width="100" height="62" viewBox="0 0 100 62"><path d="M11.5 6.2L6.2 16.9 65.9 46.1 62.2 53.1 90.4 55.8 72.3 33.9 68.7 40.7z" fill="#ff0000" stroke="#fff" stroke-width="1" stroke-linejoin="miter"/></svg></body></html>
